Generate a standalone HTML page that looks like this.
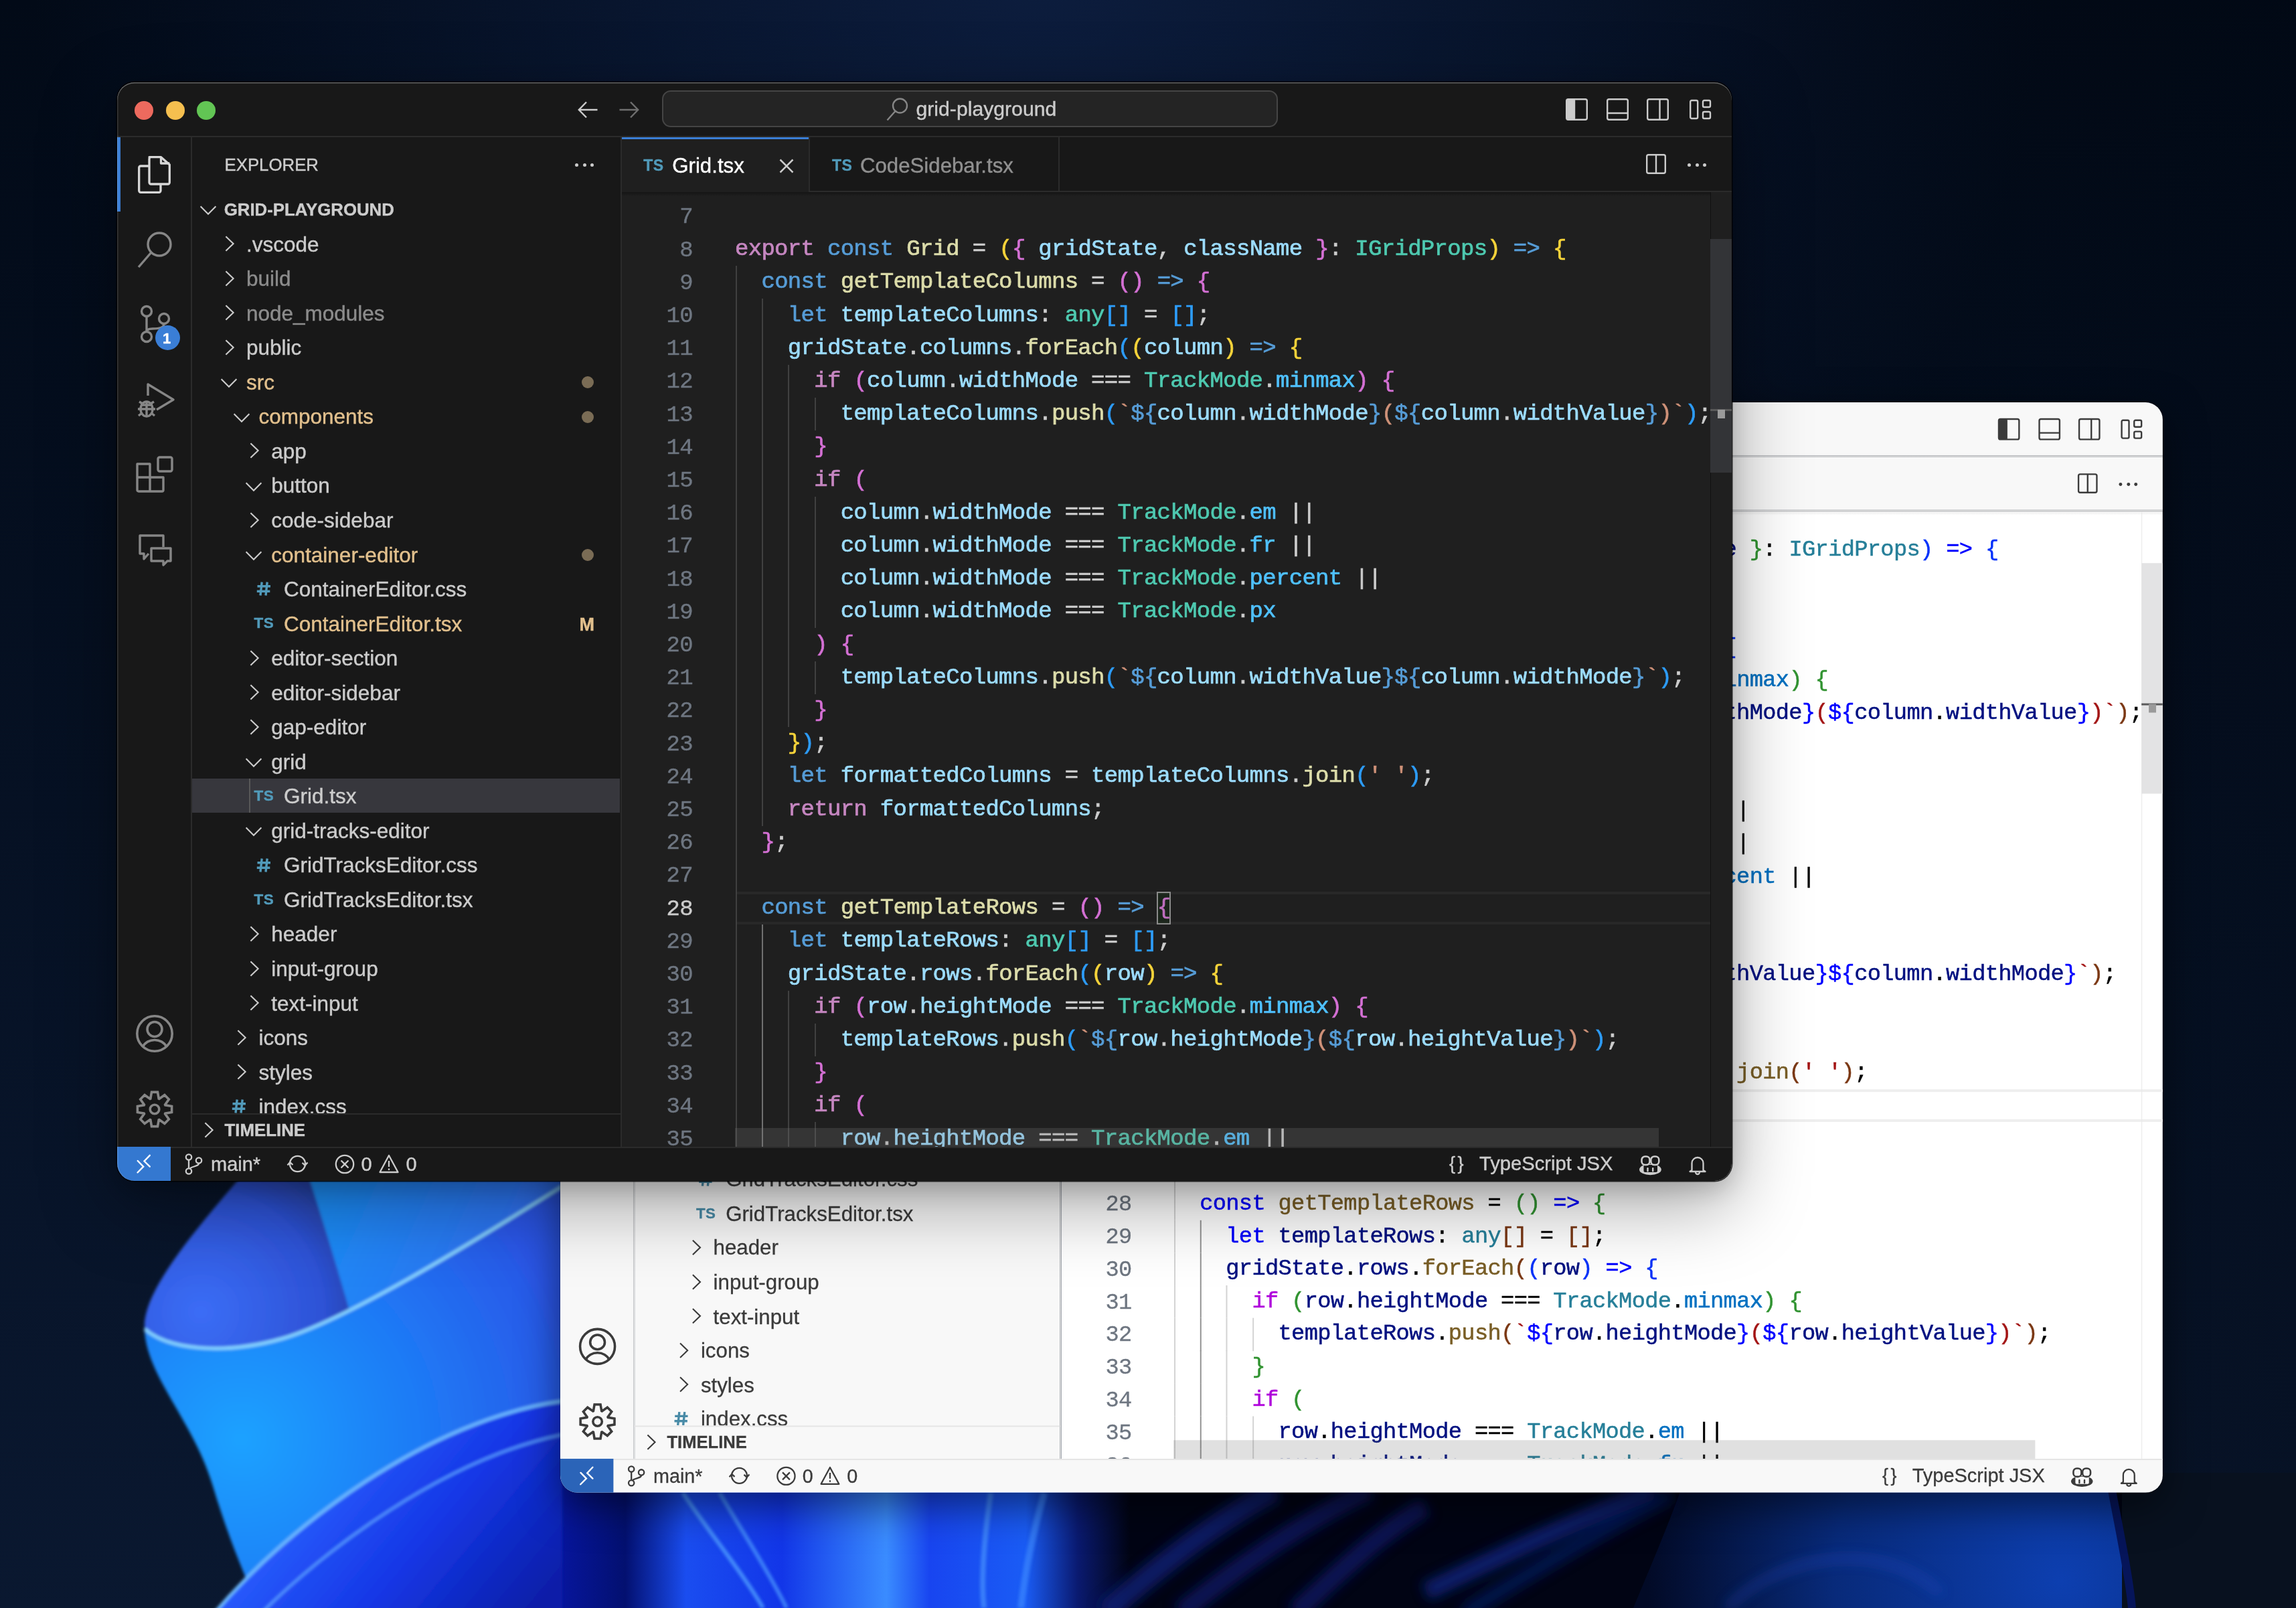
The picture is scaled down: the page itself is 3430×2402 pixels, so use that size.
<!DOCTYPE html><html><head><meta charset="utf-8"><style>html,body{margin:0;padding:0}body{width:3430px;height:2402px;overflow:hidden;position:relative;background:#050d1c}.wd div{-webkit-text-stroke-width:0.4px}.wl div{-webkit-text-stroke-width:0.3px}</style></head><body><svg style="position:absolute;left:0;top:0" width="3430" height="2402" viewBox="0 0 3430 2402">
<defs>
<linearGradient id="g0" x1="0" y1="0" x2="0" y2="1">
<stop offset="0" stop-color="#020a17"/><stop offset="1" stop-color="#0a1830"/>
</linearGradient>
<radialGradient id="g1" cx="1550" cy="-50" r="1500" gradientUnits="userSpaceOnUse" gradientTransform="translate(1550 -50) scale(1 0.9) translate(-1550 50)">
<stop offset="0" stop-color="#0d1e40" stop-opacity="0.95"/><stop offset="1" stop-color="#0d1e40" stop-opacity="0"/>
</radialGradient>
<linearGradient id="g2" x1="2300" y1="0" x2="3430" y2="0" gradientUnits="userSpaceOnUse">
<stop offset="0" stop-color="#000610" stop-opacity="0"/><stop offset="1" stop-color="#000610" stop-opacity="0.3"/>
</linearGradient>
<radialGradient id="rA" cx="360" cy="2150" r="520" gradientUnits="userSpaceOnUse">
<stop offset="0" stop-color="#1aa2ff"/><stop offset="0.55" stop-color="#1f78f5"/><stop offset="1" stop-color="#2a55e6"/>
</radialGradient>
<radialGradient id="rFold" cx="300" cy="1960" r="260" gradientUnits="userSpaceOnUse">
<stop offset="0" stop-color="#3b6df6"/><stop offset="0.7" stop-color="#2d52d6"/><stop offset="1" stop-color="#263f9e"/>
</radialGradient>
<linearGradient id="gBack" x1="470" y1="1770" x2="760" y2="1900" gradientUnits="userSpaceOnUse">
<stop offset="0" stop-color="#1a8ff8"/><stop offset="1" stop-color="#2f6ff0"/>
</linearGradient>
<linearGradient id="gB" x1="500" y1="2150" x2="800" y2="2402" gradientUnits="userSpaceOnUse">
<stop offset="0" stop-color="#2a60ff"/><stop offset="0.5" stop-color="#1537e6"/><stop offset="1" stop-color="#0a1ea8"/>
</linearGradient>
<linearGradient id="gStrip" x1="830" y1="0" x2="3430" y2="0" gradientUnits="userSpaceOnUse">
<stop offset="0" stop-color="#0716a0"/>
<stop offset="0.04" stop-color="#031070"/>
<stop offset="0.075" stop-color="#1a4df0"/>
<stop offset="0.13" stop-color="#1236e8"/>
<stop offset="0.19" stop-color="#3a8cff"/>
<stop offset="0.215" stop-color="#1845f0"/>
<stop offset="0.27" stop-color="#1a5cf5"/>
<stop offset="0.30" stop-color="#0a1a70"/>
<stop offset="0.33" stop-color="#010414"/>
<stop offset="1" stop-color="#010414"/>
</linearGradient>
<radialGradient id="gDome" cx="3080" cy="2360" r="620" gradientUnits="userSpaceOnUse">
<stop offset="0" stop-color="#0d3fb0"/><stop offset="0.55" stop-color="#082a7a"/><stop offset="1" stop-color="#020a26"/>
</radialGradient>
<filter id="blur2" x="-5%" y="-5%" width="110%" height="110%"><feGaussianBlur stdDeviation="2"/></filter>
<filter id="blur6" x="-20%" y="-20%" width="140%" height="140%"><feGaussianBlur stdDeviation="9"/></filter>
</defs>
<rect width="3430" height="2402" fill="url(#g0)"/>
<rect width="3430" height="2402" fill="url(#g1)"/>
<rect width="3430" height="2402" fill="url(#g2)"/>
<!-- bottom strip -->
<rect x="830" y="2200" width="2600" height="202" fill="url(#gStrip)"/>
<path d="M2440 2402 C2470 2330 2500 2260 2520 2200 L3150 2200 C3165 2280 3180 2350 3185 2402 Z" fill="url(#gDome)"/>
<rect x="3170" y="2200" width="260" height="202" fill="#08111f"/>
<path d="M3150 2200 C3165 2280 3180 2350 3185 2402" stroke="#06155a" stroke-width="12" fill="none"/>
<g filter="url(#blur2)" fill="none">
<path d="M1020 2230 C1060 2290 1110 2350 1140 2402" stroke="#4f9dff" stroke-width="6" opacity="0.8"/>
<path d="M1075 2230 C1110 2290 1150 2350 1175 2402" stroke="#4f9dff" stroke-width="6" opacity="0.7"/>
<path d="M1480 2230 C1470 2300 1465 2360 1470 2402" stroke="#4f9dff" stroke-width="8" opacity="0.6"/>
<path d="M1560 2230 C1540 2300 1530 2360 1525 2402" stroke="#3f8dff" stroke-width="10" opacity="0.6"/>
</g><g filter="url(#blur6)" fill="none"><path d="M1651 2410 C1730 2340 1820 2270 1906 2225" stroke="#0c2280" stroke-width="34" opacity="0.75"/>
<path d="M1763 2410 C1850 2340 1950 2270 2047 2225" stroke="#0c2280" stroke-width="30" opacity="0.6"/>
<path d="M1934 2410 C2000 2350 2060 2290 2130 2250" stroke="#0c2280" stroke-width="30" opacity="0.6"/>
<path d="M2130 2378 C2250 2320 2380 2260 2470 2225" stroke="#0d2890" stroke-width="28" opacity="0.7"/>
<path d="M2187 2410 C2300 2340 2420 2270 2498 2232" stroke="#0a2070" stroke-width="24" opacity="0.6"/>
<path d="M2580 2402 C2650 2330 2800 2290 2900 2380" stroke="#2a50d0" stroke-width="8" opacity="0.5"/>
</g>
<!-- ribbon A -->
<g filter="url(#blur2)">
<path d="M358 1760 C290 1840 212 1930 216 1990 C222 2060 290 2125 318 2220 C342 2300 368 2360 390 2410 L840 2410 L840 1760 Z" fill="url(#rA)"/>
<path d="M358 1760 C290 1840 212 1930 216 1985 C250 2015 330 2025 420 2000 C450 1991 490 1972 522 1957 C500 1880 475 1800 462 1760 Z" fill="url(#rFold)"/>
<path d="M462 1760 C475 1800 500 1880 522 1957 C600 1920 720 1848 840 1772 L840 1760 Z" fill="url(#gBack)"/>
<path d="M216 1985 C250 2015 330 2025 420 2000 C510 1975 690 1866 840 1772" fill="none" stroke="#86d4ff" stroke-width="5"/>
<path d="M320 2410 C430 2280 640 2120 840 2093 L840 2410 Z" fill="url(#gB)"/>
<path d="M320 2410 C430 2280 640 2120 840 2093" fill="none" stroke="#6ab8ff" stroke-width="5"/>
<path d="M390 2410 C480 2320 660 2180 840 2143" fill="none" stroke="#5aa0ff" stroke-width="4" opacity="0.85"/>
</g>
</svg>
<div class="wl" style="position:absolute;left:837px;top:601px;width:2412px;height:1641px;transform:scale(0.9925);transform-origin:0 0;border-radius:26px;overflow:hidden;box-shadow:0 0 0 1px rgba(0,0,0,0.2), 0 20px 60px rgba(0,0,0,0.5)"><div style="position:absolute;left:0.0px;top:0.0px;width:2412.0px;height:80.0px;background:#f8f8f8;"></div><div style="position:absolute;left:0.0px;top:80.0px;width:2412.0px;height:2.0px;background:#e5e5e5;"></div><div style="position:absolute;left:26.0px;top:28.0px;width:28.0px;height:28.0px;background:#ed6a5e;border-radius:50%"></div><div style="position:absolute;left:72.5px;top:28.0px;width:28.0px;height:28.0px;background:#f5bf4f;border-radius:50%"></div><div style="position:absolute;left:119.4px;top:28.0px;width:28.0px;height:28.0px;background:#62c554;border-radius:50%"></div><svg style="position:absolute;left:688px;top:28px;width:30px;height:26px;overflow:visible" viewBox="0 0 30 26" ><path d="M13 1.5 L1.8 13 L13 24.5 M1.8 13 H29.5" fill="none" stroke="#3b3b3b" stroke-width="2.4"/></svg><svg style="position:absolute;left:750px;top:28px;width:30px;height:26px;overflow:visible" viewBox="0 0 30 26" ><path d="M17 1.5 L28.2 13 L17 24.5 M28.2 13 H0.5" fill="none" stroke="#a0a0a0" stroke-width="2.4"/></svg><div style="position:absolute;left:814.0px;top:12.0px;width:920.0px;height:55.0px;background:#ffffff;border:2px solid #cecece;box-sizing:border-box;border-radius:13px"></div><svg style="position:absolute;left:1149px;top:22px;width:34px;height:36px;overflow:visible" viewBox="0 0 34 36" ><g fill="none" stroke="#3b3b3b" stroke-width="2.4"><circle cx="20.5" cy="13" r="10.5"/><path d="M13.5 21 L1.5 34.5"/></g></svg><div style="position:absolute;left:1193.5px;top:24.7px;font:400 30.2px/30.2px 'Liberation Sans', sans-serif;color:#3b3b3b;white-space:pre;">grid-playground</div><svg style="position:absolute;left:2164px;top:23.5px;width:33px;height:33px;overflow:visible" viewBox="0 0 33 33" ><rect x="1.2" y="1.2" width="30.6" height="30.6" rx="2.5" fill="none" stroke="#3b3b3b" stroke-width="2.4"/><rect x="1.2" y="1.2" width="13" height="30.6" rx="2" fill="#3b3b3b"/></svg><svg style="position:absolute;left:2225px;top:23.5px;width:33px;height:33px;overflow:visible" viewBox="0 0 33 33" ><rect x="1.2" y="1.2" width="30.6" height="30.6" rx="2.5" fill="none" stroke="#3b3b3b" stroke-width="2.4"/><path d="M1.2 22 H31.8" stroke="#3b3b3b" stroke-width="2.4"/></svg><svg style="position:absolute;left:2285px;top:23.5px;width:33px;height:33px;overflow:visible" viewBox="0 0 33 33" ><rect x="1.2" y="1.2" width="30.6" height="30.6" rx="2.5" fill="none" stroke="#3b3b3b" stroke-width="2.4"/><path d="M19.5 1.2 V31.8" stroke="#3b3b3b" stroke-width="2.4"/></svg><svg style="position:absolute;left:2349px;top:23.5px;width:33px;height:33px;overflow:visible" viewBox="0 0 33 33" ><g fill="none" stroke="#3b3b3b" stroke-width="2.4"><rect x="1.2" y="3" width="11" height="27" rx="2"/><rect x="20" y="3" width="11" height="10" rx="2"/><rect x="20" y="20" width="11" height="10" rx="2"/></g></svg><div style="position:absolute;left:0.0px;top:82.0px;width:110.0px;height:1508.0px;background:#f8f8f8;"></div><div style="position:absolute;left:110.0px;top:82.0px;width:2.0px;height:1508.0px;background:#e5e5e5;"></div><div style="position:absolute;left:0.0px;top:82.0px;width:5.0px;height:111.0px;background:#2b64b8;"></div><svg style="position:absolute;left:30.5px;top:110px;width:50px;height:56px;overflow:visible" viewBox="0 0 50 56" ><g fill="none" stroke="#1f1f1f" stroke-width="3.3" stroke-linejoin="round"><path d="M17 1.7 H34.5 L47.3 13 V39.5 a2.5 2.5 0 0 1-2.5 2.5 H19.5 a2.5 2.5 0 0 1-2.5-2.5 V4.2 a2.5 2.5 0 0 1 2.5-2.5 Z"/><path d="M34.5 1.7 V11 H47.3"/><path d="M17 15 H4.2 a2.5 2.5 0 0 0-2.5 2.5 V51.8 a2.5 2.5 0 0 0 2.5 2.5 H31.5 a2.5 2.5 0 0 0 2.5-2.5 V42"/></g></svg><svg style="position:absolute;left:30px;top:221px;width:56px;height:58px;overflow:visible" viewBox="0 0 56 58" ><g fill="none" stroke="#3b3b3b" stroke-width="3.4"><circle cx="33" cy="21" r="17"/><path d="M21 33 L2 55"/></g></svg><svg style="position:absolute;left:32.5px;top:333px;width:52px;height:56px;overflow:visible" viewBox="0 0 52 56" ><g fill="none" stroke="#3b3b3b" stroke-width="3.4"><circle cx="11" cy="9" r="7.5"/><circle cx="37" cy="20" r="7.5"/><circle cx="11" cy="47" r="7.5"/><path d="M11 16.5 V39.5"/><path d="M37 27.5 C37 34 30 35 20 35 C14 35 11 37 11 39.5"/></g></svg><div style="position:absolute;left:56.5px;top:362.5px;width:37.0px;height:37.0px;background:#2b64b8;border-radius:50%"></div><div style="position:absolute;left:68.0px;top:372.4px;font:700 22px/22px 'Liberation Sans', sans-serif;color:#ffffff;white-space:pre;">1</div><svg style="position:absolute;left:27px;top:448px;width:62px;height:56px;overflow:visible" viewBox="0 0 62 56" ><g fill="none" stroke="#3b3b3b" stroke-width="3.4" stroke-linejoin="round"><path d="M19 20 V3 L57 26 L32 41"/><ellipse cx="17" cy="40" rx="9" ry="11"/><path d="M8 34 H26 M4 40 H30 M5 50 L10 46 M29 50 L24 46 M6 29 L11 32 M28 29 L23 32 M17 29 V51"/></g></svg><svg style="position:absolute;left:27px;top:558px;width:58px;height:58px;overflow:visible" viewBox="0 0 58 58" ><g fill="none" stroke="#3b3b3b" stroke-width="3.4" stroke-linejoin="round"><path d="M3 12 H22 V32 H42 V51 a2 2 0 0 1 -2 2 H5 a2 2 0 0 1 -2-2 Z"/><path d="M3 32 H22 V53"/><rect x="34" y="2" width="21" height="21" rx="2.5"/></g></svg><svg style="position:absolute;left:31px;top:674px;width:52px;height:50px;overflow:visible" viewBox="0 0 52 50" ><g fill="none" stroke="#3b3b3b" stroke-width="3.4" stroke-linejoin="round"><path d="M38 20 V3 H3 V30 H9 V38 L16 30"/><path d="M20 22 H49 V41 H44 L38 47 V41 H20 Z"/></g></svg><svg style="position:absolute;left:27px;top:1392px;width:58px;height:58px;overflow:visible" viewBox="0 0 58 58" ><g fill="none" stroke="#3b3b3b" stroke-width="3.6"><circle cx="29" cy="29" r="26.2"/><circle cx="29" cy="22.5" r="11"/><path d="M11.5 48.5 A19 16.5 0 0 1 46.5 48.5"/></g></svg><svg style="position:absolute;left:25px;top:1503px;width:62px;height:62px;overflow:visible" viewBox="0 0 62 62" ><g fill="none" stroke="#3b3b3b" stroke-width="3.6" stroke-linejoin="miter"><path d="M24.80 15.17 L26.49 5.39 L35.51 5.39 L37.20 15.17 L37.81 15.42 L45.91 9.70 L52.30 16.09 L46.58 24.19 L46.83 24.80 L56.61 26.49 L56.61 35.51 L46.83 37.20 L46.58 37.81 L52.30 45.91 L45.91 52.30 L37.81 46.58 L37.20 46.83 L35.51 56.61 L26.49 56.61 L24.80 46.83 L24.19 46.58 L16.09 52.30 L9.70 45.91 L15.42 37.81 L15.17 37.20 L5.39 35.51 L5.39 26.49 L15.17 24.80 L15.42 24.19 L9.70 16.09 L16.09 9.70 L24.19 15.42 Z"/><circle cx="31" cy="31" r="6.8"/></g></svg><div style="position:absolute;left:112.0px;top:82.0px;width:640.0px;height:1508.0px;background:#f8f8f8;"></div><div style="position:absolute;left:752.0px;top:82.0px;width:2.0px;height:1508.0px;background:#e5e5e5;"></div><div style="position:absolute;left:160.5px;top:110.7px;font:400 25.8px/25.8px 'Liberation Sans', sans-serif;color:#3b3b3b;white-space:pre;">EXPLORER</div><div style="position:absolute;left:684.0px;top:120.5px;width:5.0px;height:5.0px;background:#3b3b3b;border-radius:50%"></div><div style="position:absolute;left:695.5px;top:120.5px;width:5.0px;height:5.0px;background:#3b3b3b;border-radius:50%"></div><div style="position:absolute;left:707.0px;top:120.5px;width:5.0px;height:5.0px;background:#3b3b3b;border-radius:50%"></div><svg style="position:absolute;left:122.69999999999999px;top:182.7px;width:26px;height:16px;overflow:visible" viewBox="0 0 26 16" ><path d="M1.6 2.3 L13 13.7 L24.4 2.3" fill="none" stroke="#3b3b3b" stroke-width="2.1"/></svg><div style="position:absolute;left:159.7px;top:177.7px;font:700 25.8px/25.8px 'Liberation Sans', sans-serif;color:#3b3b3b;white-space:pre;">GRID-PLAYGROUND</div><div style="position:absolute;left:0;top:0;width:2412px;height:1539.5px;overflow:hidden"><svg style="position:absolute;left:159.5px;top:227.20000000000002px;width:16px;height:28px;overflow:visible" viewBox="0 0 16 28" ><path d="M2.4 3.2 L13.6 14 L2.4 24.8" fill="none" stroke="#3b3b3b" stroke-width="2.1"/></svg><div style="position:absolute;left:192.9px;top:226.6px;font:400 31.5px/31.5px 'Liberation Sans', sans-serif;color:#3b3b3b;white-space:pre;">.vscode</div><svg style="position:absolute;left:159.5px;top:278.74px;width:16px;height:28px;overflow:visible" viewBox="0 0 16 28" ><path d="M2.4 3.2 L13.6 14 L2.4 24.8" fill="none" stroke="#3b3b3b" stroke-width="2.1"/></svg><div style="position:absolute;left:192.9px;top:278.2px;font:400 31.5px/31.5px 'Liberation Sans', sans-serif;color:#8e8e90;white-space:pre;">build</div><svg style="position:absolute;left:159.5px;top:330.28px;width:16px;height:28px;overflow:visible" viewBox="0 0 16 28" ><path d="M2.4 3.2 L13.6 14 L2.4 24.8" fill="none" stroke="#3b3b3b" stroke-width="2.1"/></svg><div style="position:absolute;left:192.9px;top:329.7px;font:400 31.5px/31.5px 'Liberation Sans', sans-serif;color:#8e8e90;white-space:pre;">node_modules</div><svg style="position:absolute;left:159.5px;top:381.82px;width:16px;height:28px;overflow:visible" viewBox="0 0 16 28" ><path d="M2.4 3.2 L13.6 14 L2.4 24.8" fill="none" stroke="#3b3b3b" stroke-width="2.1"/></svg><div style="position:absolute;left:192.9px;top:381.3px;font:400 31.5px/31.5px 'Liberation Sans', sans-serif;color:#3b3b3b;white-space:pre;">public</div><svg style="position:absolute;left:154.0px;top:440.96000000000004px;width:26px;height:16px;overflow:visible" viewBox="0 0 26 16" ><path d="M1.6 2.3 L13 13.7 L24.4 2.3" fill="none" stroke="#3b3b3b" stroke-width="2.1"/></svg><div style="position:absolute;left:192.9px;top:432.8px;font:400 31.5px/31.5px 'Liberation Sans', sans-serif;color:#895503;white-space:pre;">src</div><div style="position:absolute;left:693.5px;top:439.0px;width:18.0px;height:18.0px;background:#c9a86a;border-radius:50%"></div><svg style="position:absolute;left:172.7px;top:492.5px;width:26px;height:16px;overflow:visible" viewBox="0 0 26 16" ><path d="M1.6 2.3 L13 13.7 L24.4 2.3" fill="none" stroke="#3b3b3b" stroke-width="2.1"/></svg><div style="position:absolute;left:211.5px;top:484.3px;font:400 31.5px/31.5px 'Liberation Sans', sans-serif;color:#895503;white-space:pre;">components</div><div style="position:absolute;left:693.5px;top:490.5px;width:18.0px;height:18.0px;background:#c9a86a;border-radius:50%"></div><svg style="position:absolute;left:196.9px;top:536.4399999999999px;width:16px;height:28px;overflow:visible" viewBox="0 0 16 28" ><path d="M2.4 3.2 L13.6 14 L2.4 24.8" fill="none" stroke="#3b3b3b" stroke-width="2.1"/></svg><div style="position:absolute;left:230.3px;top:535.9px;font:400 31.5px/31.5px 'Liberation Sans', sans-serif;color:#3b3b3b;white-space:pre;">app</div><svg style="position:absolute;left:191.4px;top:595.5799999999999px;width:26px;height:16px;overflow:visible" viewBox="0 0 26 16" ><path d="M1.6 2.3 L13 13.7 L24.4 2.3" fill="none" stroke="#3b3b3b" stroke-width="2.1"/></svg><div style="position:absolute;left:230.3px;top:587.4px;font:400 31.5px/31.5px 'Liberation Sans', sans-serif;color:#3b3b3b;white-space:pre;">button</div><svg style="position:absolute;left:196.9px;top:639.52px;width:16px;height:28px;overflow:visible" viewBox="0 0 16 28" ><path d="M2.4 3.2 L13.6 14 L2.4 24.8" fill="none" stroke="#3b3b3b" stroke-width="2.1"/></svg><div style="position:absolute;left:230.3px;top:639.0px;font:400 31.5px/31.5px 'Liberation Sans', sans-serif;color:#3b3b3b;white-space:pre;">code-sidebar</div><svg style="position:absolute;left:191.4px;top:698.6600000000001px;width:26px;height:16px;overflow:visible" viewBox="0 0 26 16" ><path d="M1.6 2.3 L13 13.7 L24.4 2.3" fill="none" stroke="#3b3b3b" stroke-width="2.1"/></svg><div style="position:absolute;left:230.3px;top:690.5px;font:400 31.5px/31.5px 'Liberation Sans', sans-serif;color:#895503;white-space:pre;">container-editor</div><div style="position:absolute;left:693.5px;top:696.7px;width:18.0px;height:18.0px;background:#c9a86a;border-radius:50%"></div><svg style="position:absolute;left:208.2px;top:746.2px;width:22px;height:21px;overflow:visible" viewBox="0 0 22 21" ><path d="M8.2 0.5 L6 20.5 M16.2 0.5 L14 20.5 M1.5 6.8 H21 M0.8 14.2 H20.3" stroke="#498ba7" stroke-width="3.4" fill="none"/></svg><div style="position:absolute;left:249.0px;top:742.0px;font:400 31.5px/31.5px 'Liberation Sans', sans-serif;color:#3b3b3b;white-space:pre;">ContainerEditor.css</div><div style="position:absolute;left:204.5px;top:797.2px;font:700 22.5px/22.5px 'Liberation Sans', sans-serif;color:#498ba7;white-space:pre;letter-spacing:0.5px">TS</div><div style="position:absolute;left:249.0px;top:793.6px;font:400 31.5px/31.5px 'Liberation Sans', sans-serif;color:#895503;white-space:pre;">ContainerEditor.tsx</div><div style="position:absolute;left:690.5px;top:797.4px;font:700 27px/27px 'Liberation Sans', sans-serif;color:#895503;white-space:pre;">M</div><svg style="position:absolute;left:196.9px;top:845.68px;width:16px;height:28px;overflow:visible" viewBox="0 0 16 28" ><path d="M2.4 3.2 L13.6 14 L2.4 24.8" fill="none" stroke="#3b3b3b" stroke-width="2.1"/></svg><div style="position:absolute;left:230.3px;top:845.1px;font:400 31.5px/31.5px 'Liberation Sans', sans-serif;color:#3b3b3b;white-space:pre;">editor-section</div><svg style="position:absolute;left:196.9px;top:897.2199999999999px;width:16px;height:28px;overflow:visible" viewBox="0 0 16 28" ><path d="M2.4 3.2 L13.6 14 L2.4 24.8" fill="none" stroke="#3b3b3b" stroke-width="2.1"/></svg><div style="position:absolute;left:230.3px;top:896.7px;font:400 31.5px/31.5px 'Liberation Sans', sans-serif;color:#3b3b3b;white-space:pre;">editor-sidebar</div><svg style="position:absolute;left:196.9px;top:948.7599999999999px;width:16px;height:28px;overflow:visible" viewBox="0 0 16 28" ><path d="M2.4 3.2 L13.6 14 L2.4 24.8" fill="none" stroke="#3b3b3b" stroke-width="2.1"/></svg><div style="position:absolute;left:230.3px;top:948.2px;font:400 31.5px/31.5px 'Liberation Sans', sans-serif;color:#3b3b3b;white-space:pre;">gap-editor</div><svg style="position:absolute;left:191.4px;top:1007.9000000000001px;width:26px;height:16px;overflow:visible" viewBox="0 0 26 16" ><path d="M1.6 2.3 L13 13.7 L24.4 2.3" fill="none" stroke="#3b3b3b" stroke-width="2.1"/></svg><div style="position:absolute;left:230.3px;top:999.7px;font:400 31.5px/31.5px 'Liberation Sans', sans-serif;color:#3b3b3b;white-space:pre;">grid</div><div style="position:absolute;left:112.0px;top:1040.4px;width:639.0px;height:50.5px;background:#e4e6f1;"></div><div style="position:absolute;left:197.0px;top:1040.4px;width:2.0px;height:50.5px;background:#c8c8c8;"></div><div style="position:absolute;left:204.5px;top:1054.9px;font:700 22.5px/22.5px 'Liberation Sans', sans-serif;color:#498ba7;white-space:pre;letter-spacing:0.5px">TS</div><div style="position:absolute;left:249.0px;top:1051.3px;font:400 31.5px/31.5px 'Liberation Sans', sans-serif;color:#3b3b3b;white-space:pre;">Grid.tsx</div><svg style="position:absolute;left:191.4px;top:1110.98px;width:26px;height:16px;overflow:visible" viewBox="0 0 26 16" ><path d="M1.6 2.3 L13 13.7 L24.4 2.3" fill="none" stroke="#3b3b3b" stroke-width="2.1"/></svg><div style="position:absolute;left:230.3px;top:1102.8px;font:400 31.5px/31.5px 'Liberation Sans', sans-serif;color:#3b3b3b;white-space:pre;">grid-tracks-editor</div><svg style="position:absolute;left:208.2px;top:1158.52px;width:22px;height:21px;overflow:visible" viewBox="0 0 22 21" ><path d="M8.2 0.5 L6 20.5 M16.2 0.5 L14 20.5 M1.5 6.8 H21 M0.8 14.2 H20.3" stroke="#498ba7" stroke-width="3.4" fill="none"/></svg><div style="position:absolute;left:249.0px;top:1154.4px;font:400 31.5px/31.5px 'Liberation Sans', sans-serif;color:#3b3b3b;white-space:pre;">GridTracksEditor.css</div><div style="position:absolute;left:204.5px;top:1209.5px;font:700 22.5px/22.5px 'Liberation Sans', sans-serif;color:#498ba7;white-space:pre;letter-spacing:0.5px">TS</div><div style="position:absolute;left:249.0px;top:1205.9px;font:400 31.5px/31.5px 'Liberation Sans', sans-serif;color:#3b3b3b;white-space:pre;">GridTracksEditor.tsx</div><svg style="position:absolute;left:196.9px;top:1258.0px;width:16px;height:28px;overflow:visible" viewBox="0 0 16 28" ><path d="M2.4 3.2 L13.6 14 L2.4 24.8" fill="none" stroke="#3b3b3b" stroke-width="2.1"/></svg><div style="position:absolute;left:230.3px;top:1257.4px;font:400 31.5px/31.5px 'Liberation Sans', sans-serif;color:#3b3b3b;white-space:pre;">header</div><svg style="position:absolute;left:196.9px;top:1309.54px;width:16px;height:28px;overflow:visible" viewBox="0 0 16 28" ><path d="M2.4 3.2 L13.6 14 L2.4 24.8" fill="none" stroke="#3b3b3b" stroke-width="2.1"/></svg><div style="position:absolute;left:230.3px;top:1309.0px;font:400 31.5px/31.5px 'Liberation Sans', sans-serif;color:#3b3b3b;white-space:pre;">input-group</div><svg style="position:absolute;left:196.9px;top:1361.08px;width:16px;height:28px;overflow:visible" viewBox="0 0 16 28" ><path d="M2.4 3.2 L13.6 14 L2.4 24.8" fill="none" stroke="#3b3b3b" stroke-width="2.1"/></svg><div style="position:absolute;left:230.3px;top:1360.5px;font:400 31.5px/31.5px 'Liberation Sans', sans-serif;color:#3b3b3b;white-space:pre;">text-input</div><svg style="position:absolute;left:178.2px;top:1412.6200000000001px;width:16px;height:28px;overflow:visible" viewBox="0 0 16 28" ><path d="M2.4 3.2 L13.6 14 L2.4 24.8" fill="none" stroke="#3b3b3b" stroke-width="2.1"/></svg><div style="position:absolute;left:211.5px;top:1412.1px;font:400 31.5px/31.5px 'Liberation Sans', sans-serif;color:#3b3b3b;white-space:pre;">icons</div><svg style="position:absolute;left:178.2px;top:1464.16px;width:16px;height:28px;overflow:visible" viewBox="0 0 16 28" ><path d="M2.4 3.2 L13.6 14 L2.4 24.8" fill="none" stroke="#3b3b3b" stroke-width="2.1"/></svg><div style="position:absolute;left:211.5px;top:1463.6px;font:400 31.5px/31.5px 'Liberation Sans', sans-serif;color:#3b3b3b;white-space:pre;">styles</div><svg style="position:absolute;left:170.7px;top:1519.3px;width:22px;height:21px;overflow:visible" viewBox="0 0 22 21" ><path d="M8.2 0.5 L6 20.5 M16.2 0.5 L14 20.5 M1.5 6.8 H21 M0.8 14.2 H20.3" stroke="#498ba7" stroke-width="3.4" fill="none"/></svg><div style="position:absolute;left:211.5px;top:1515.1px;font:400 31.5px/31.5px 'Liberation Sans', sans-serif;color:#3b3b3b;white-space:pre;">index.css</div></div><div style="position:absolute;left:112.0px;top:1539.5px;width:640.0px;height:2.0px;background:#e5e5e5;"></div><svg style="position:absolute;left:128.5px;top:1551px;width:16px;height:28px;overflow:visible" viewBox="0 0 16 28" ><path d="M2.4 3.2 L13.6 14 L2.4 24.8" fill="none" stroke="#3b3b3b" stroke-width="2.1"/></svg><div style="position:absolute;left:160.6px;top:1553.0px;font:700 25.8px/25.8px 'Liberation Sans', sans-serif;color:#3b3b3b;white-space:pre;">TIMELINE</div><div style="position:absolute;left:754.0px;top:82.0px;width:1658.0px;height:80.0px;background:#f8f8f8;"></div><div style="position:absolute;left:754.0px;top:162.0px;width:1658.0px;height:2.0px;background:#e5e5e5;"></div><div style="position:absolute;left:754.0px;top:82.0px;width:279.0px;height:82.0px;background:#ffffff;"></div><div style="position:absolute;left:754.0px;top:82.0px;width:279.0px;height:2.6px;background:#2b64b8;"></div><div style="position:absolute;left:786.3px;top:112.7px;font:700 23px/23px 'Liberation Sans', sans-serif;color:#498ba7;white-space:pre;letter-spacing:0.5px">TS</div><div style="position:absolute;left:829.3px;top:109.1px;font:400 31.2px/31.2px 'Liberation Sans', sans-serif;color:#333333;white-space:pre;">Grid.tsx</div><svg style="position:absolute;left:989px;top:113.5px;width:22px;height:22px;overflow:visible" viewBox="0 0 22 22" ><path d="M1.5 1.5 L20.5 20.5 M20.5 1.5 L1.5 20.5" stroke="#3b3b3b" stroke-width="2.5"/></svg><div style="position:absolute;left:1033.0px;top:82.0px;width:2.0px;height:80.0px;background:#e5e5e5;"></div><div style="position:absolute;left:1406.0px;top:82.0px;width:2.0px;height:80.0px;background:#e5e5e5;"></div><div style="position:absolute;left:1068.0px;top:112.7px;font:700 23px/23px 'Liberation Sans', sans-serif;color:#498ba7;white-space:pre;letter-spacing:0.5px">TS</div><div style="position:absolute;left:1110.0px;top:109.1px;font:400 31.2px/31.2px 'Liberation Sans', sans-serif;color:#868686;white-space:pre;">CodeSidebar.tsx</div><svg style="position:absolute;left:2283.5px;top:107px;width:30px;height:30px;overflow:visible" viewBox="0 0 30 30" ><g fill="none" stroke="#3b3b3b" stroke-width="2.4"><rect x="1.2" y="1.2" width="27.6" height="27.6" rx="2.5"/><path d="M15 1.2 V28.8"/></g></svg><div style="position:absolute;left:2346.0px;top:120.5px;width:5.0px;height:5.0px;background:#3b3b3b;border-radius:50%"></div><div style="position:absolute;left:2357.5px;top:120.5px;width:5.0px;height:5.0px;background:#3b3b3b;border-radius:50%"></div><div style="position:absolute;left:2369.0px;top:120.5px;width:5.0px;height:5.0px;background:#3b3b3b;border-radius:50%"></div><div style="position:absolute;left:754px;top:164px;width:1658px;height:1426px;overflow:hidden"><div style="position:absolute;left:0.0px;top:0.0px;width:1658.0px;height:1426.0px;background:#ffffff;"></div><div style="position:absolute;left:171.0px;top:869.8px;width:1490.0px;height:49.6px;background:transparent;border-top:4.6px solid #eeeeee;border-bottom:4.6px solid #eeeeee;box-sizing:border-box"></div><div style="position:absolute;left:169.5px;top:82.6px;width:2.0px;height:49.4px;background:#d3d3d3;"></div><div style="position:absolute;left:169.5px;top:131.8px;width:2.0px;height:49.4px;background:#d3d3d3;"></div><div style="position:absolute;left:169.5px;top:181.0px;width:2.0px;height:49.4px;background:#d3d3d3;"></div><div style="position:absolute;left:169.5px;top:230.2px;width:2.0px;height:49.4px;background:#d3d3d3;"></div><div style="position:absolute;left:169.5px;top:279.4px;width:2.0px;height:49.4px;background:#d3d3d3;"></div><div style="position:absolute;left:169.5px;top:328.6px;width:2.0px;height:49.4px;background:#d3d3d3;"></div><div style="position:absolute;left:169.5px;top:377.8px;width:2.0px;height:49.4px;background:#d3d3d3;"></div><div style="position:absolute;left:169.5px;top:427.0px;width:2.0px;height:49.4px;background:#d3d3d3;"></div><div style="position:absolute;left:169.5px;top:476.2px;width:2.0px;height:49.4px;background:#d3d3d3;"></div><div style="position:absolute;left:169.5px;top:525.4px;width:2.0px;height:49.4px;background:#d3d3d3;"></div><div style="position:absolute;left:169.5px;top:574.6px;width:2.0px;height:49.4px;background:#d3d3d3;"></div><div style="position:absolute;left:169.5px;top:623.8px;width:2.0px;height:49.4px;background:#d3d3d3;"></div><div style="position:absolute;left:169.5px;top:673.0px;width:2.0px;height:49.4px;background:#d3d3d3;"></div><div style="position:absolute;left:169.5px;top:722.2px;width:2.0px;height:49.4px;background:#d3d3d3;"></div><div style="position:absolute;left:169.5px;top:771.4px;width:2.0px;height:49.4px;background:#d3d3d3;"></div><div style="position:absolute;left:169.5px;top:820.6px;width:2.0px;height:49.4px;background:#d3d3d3;"></div><div style="position:absolute;left:169.5px;top:869.8px;width:2.0px;height:49.4px;background:#d3d3d3;"></div><div style="position:absolute;left:169.5px;top:919.0px;width:2.0px;height:49.4px;background:#d3d3d3;"></div><div style="position:absolute;left:169.5px;top:968.2px;width:2.0px;height:49.4px;background:#d3d3d3;"></div><div style="position:absolute;left:169.5px;top:1017.4px;width:2.0px;height:49.4px;background:#d3d3d3;"></div><div style="position:absolute;left:169.5px;top:1066.6px;width:2.0px;height:49.4px;background:#d3d3d3;"></div><div style="position:absolute;left:169.5px;top:1115.8px;width:2.0px;height:49.4px;background:#d3d3d3;"></div><div style="position:absolute;left:169.5px;top:1165.0px;width:2.0px;height:49.4px;background:#d3d3d3;"></div><div style="position:absolute;left:169.5px;top:1214.2px;width:2.0px;height:49.4px;background:#d3d3d3;"></div><div style="position:absolute;left:169.5px;top:1263.4px;width:2.0px;height:49.4px;background:#d3d3d3;"></div><div style="position:absolute;left:169.5px;top:1312.6px;width:2.0px;height:49.4px;background:#d3d3d3;"></div><div style="position:absolute;left:169.5px;top:1361.8px;width:2.0px;height:49.4px;background:#d3d3d3;"></div><div style="position:absolute;left:169.5px;top:1411.0px;width:2.0px;height:49.4px;background:#d3d3d3;"></div><div style="position:absolute;left:208.9px;top:131.8px;width:2.0px;height:49.4px;background:#d3d3d3;"></div><div style="position:absolute;left:208.9px;top:181.0px;width:2.0px;height:49.4px;background:#d3d3d3;"></div><div style="position:absolute;left:208.9px;top:230.2px;width:2.0px;height:49.4px;background:#d3d3d3;"></div><div style="position:absolute;left:208.9px;top:279.4px;width:2.0px;height:49.4px;background:#d3d3d3;"></div><div style="position:absolute;left:208.9px;top:328.6px;width:2.0px;height:49.4px;background:#d3d3d3;"></div><div style="position:absolute;left:208.9px;top:377.8px;width:2.0px;height:49.4px;background:#d3d3d3;"></div><div style="position:absolute;left:208.9px;top:427.0px;width:2.0px;height:49.4px;background:#d3d3d3;"></div><div style="position:absolute;left:208.9px;top:476.2px;width:2.0px;height:49.4px;background:#d3d3d3;"></div><div style="position:absolute;left:208.9px;top:525.4px;width:2.0px;height:49.4px;background:#d3d3d3;"></div><div style="position:absolute;left:208.9px;top:574.6px;width:2.0px;height:49.4px;background:#d3d3d3;"></div><div style="position:absolute;left:208.9px;top:623.8px;width:2.0px;height:49.4px;background:#d3d3d3;"></div><div style="position:absolute;left:208.9px;top:673.0px;width:2.0px;height:49.4px;background:#d3d3d3;"></div><div style="position:absolute;left:208.9px;top:722.2px;width:2.0px;height:49.4px;background:#d3d3d3;"></div><div style="position:absolute;left:208.9px;top:771.4px;width:2.0px;height:49.4px;background:#d3d3d3;"></div><div style="position:absolute;left:208.9px;top:820.6px;width:2.0px;height:49.4px;background:#d3d3d3;"></div><div style="position:absolute;left:208.9px;top:869.8px;width:2.0px;height:49.4px;background:#d3d3d3;"></div><div style="position:absolute;left:208.9px;top:1066.6px;width:2.0px;height:49.4px;background:#939393;"></div><div style="position:absolute;left:208.9px;top:1115.8px;width:2.0px;height:49.4px;background:#939393;"></div><div style="position:absolute;left:208.9px;top:1165.0px;width:2.0px;height:49.4px;background:#939393;"></div><div style="position:absolute;left:208.9px;top:1214.2px;width:2.0px;height:49.4px;background:#939393;"></div><div style="position:absolute;left:208.9px;top:1263.4px;width:2.0px;height:49.4px;background:#939393;"></div><div style="position:absolute;left:208.9px;top:1312.6px;width:2.0px;height:49.4px;background:#939393;"></div><div style="position:absolute;left:208.9px;top:1361.8px;width:2.0px;height:49.4px;background:#939393;"></div><div style="position:absolute;left:208.9px;top:1411.0px;width:2.0px;height:49.4px;background:#939393;"></div><div style="position:absolute;left:248.3px;top:230.2px;width:2.0px;height:49.4px;background:#d3d3d3;"></div><div style="position:absolute;left:248.3px;top:279.4px;width:2.0px;height:49.4px;background:#d3d3d3;"></div><div style="position:absolute;left:248.3px;top:328.6px;width:2.0px;height:49.4px;background:#d3d3d3;"></div><div style="position:absolute;left:248.3px;top:377.8px;width:2.0px;height:49.4px;background:#d3d3d3;"></div><div style="position:absolute;left:248.3px;top:427.0px;width:2.0px;height:49.4px;background:#d3d3d3;"></div><div style="position:absolute;left:248.3px;top:476.2px;width:2.0px;height:49.4px;background:#d3d3d3;"></div><div style="position:absolute;left:248.3px;top:525.4px;width:2.0px;height:49.4px;background:#d3d3d3;"></div><div style="position:absolute;left:248.3px;top:574.6px;width:2.0px;height:49.4px;background:#d3d3d3;"></div><div style="position:absolute;left:248.3px;top:623.8px;width:2.0px;height:49.4px;background:#d3d3d3;"></div><div style="position:absolute;left:248.3px;top:673.0px;width:2.0px;height:49.4px;background:#d3d3d3;"></div><div style="position:absolute;left:248.3px;top:722.2px;width:2.0px;height:49.4px;background:#d3d3d3;"></div><div style="position:absolute;left:248.3px;top:1165.0px;width:2.0px;height:49.4px;background:#d3d3d3;"></div><div style="position:absolute;left:248.3px;top:1214.2px;width:2.0px;height:49.4px;background:#d3d3d3;"></div><div style="position:absolute;left:248.3px;top:1263.4px;width:2.0px;height:49.4px;background:#d3d3d3;"></div><div style="position:absolute;left:248.3px;top:1312.6px;width:2.0px;height:49.4px;background:#d3d3d3;"></div><div style="position:absolute;left:248.3px;top:1361.8px;width:2.0px;height:49.4px;background:#d3d3d3;"></div><div style="position:absolute;left:248.3px;top:1411.0px;width:2.0px;height:49.4px;background:#d3d3d3;"></div><div style="position:absolute;left:287.7px;top:279.4px;width:2.0px;height:49.4px;background:#d3d3d3;"></div><div style="position:absolute;left:287.7px;top:427.0px;width:2.0px;height:49.4px;background:#d3d3d3;"></div><div style="position:absolute;left:287.7px;top:476.2px;width:2.0px;height:49.4px;background:#d3d3d3;"></div><div style="position:absolute;left:287.7px;top:525.4px;width:2.0px;height:49.4px;background:#d3d3d3;"></div><div style="position:absolute;left:287.7px;top:574.6px;width:2.0px;height:49.4px;background:#d3d3d3;"></div><div style="position:absolute;left:287.7px;top:673.0px;width:2.0px;height:49.4px;background:#d3d3d3;"></div><div style="position:absolute;left:287.7px;top:1214.2px;width:2.0px;height:49.4px;background:#d3d3d3;"></div><div style="position:absolute;left:287.7px;top:1361.8px;width:2.0px;height:49.4px;background:#d3d3d3;"></div><div style="position:absolute;left:287.7px;top:1411.0px;width:2.0px;height:49.4px;background:#d3d3d3;"></div><div style="position:absolute;left:86.3px;top:-7.1px;font:400 34.0px/34.0px 'Liberation Mono', monospace;letter-spacing:-0.70px;color:#6e7681;white-space:pre">7</div><div style="position:absolute;left:169.0px;top:-8.6px;font:400 34.0px/34.0px 'Liberation Mono', monospace;letter-spacing:-0.70px;white-space:pre;-webkit-text-stroke:0.5px currentColor"></div><div style="position:absolute;left:86.3px;top:42.1px;font:400 34.0px/34.0px 'Liberation Mono', monospace;letter-spacing:-0.70px;color:#6e7681;white-space:pre">8</div><div style="position:absolute;left:169.0px;top:40.6px;font:400 34.0px/34.0px 'Liberation Mono', monospace;letter-spacing:-0.70px;white-space:pre;-webkit-text-stroke:0.5px currentColor"><span style="color:#AF00DB;-webkit-text-stroke-color:#AF00DB">export</span> <span style="color:#0000FF;-webkit-text-stroke-color:#0000FF">const</span> <span style="color:#795E26;-webkit-text-stroke-color:#795E26">Grid</span> <span style="color:#000000;-webkit-text-stroke-color:#000000">=</span> <span style="color:#0431FA;-webkit-text-stroke-color:#0431FA">(</span><span style="color:#319331;-webkit-text-stroke-color:#319331">{</span> <span style="color:#001080;-webkit-text-stroke-color:#001080">gridState</span><span style="color:#000000;-webkit-text-stroke-color:#000000">,</span> <span style="color:#001080;-webkit-text-stroke-color:#001080">className</span> <span style="color:#319331;-webkit-text-stroke-color:#319331">}</span><span style="color:#000000;-webkit-text-stroke-color:#000000">:</span> <span style="color:#267F99;-webkit-text-stroke-color:#267F99">IGridProps</span><span style="color:#0431FA;-webkit-text-stroke-color:#0431FA">)</span> <span style="color:#0000FF;-webkit-text-stroke-color:#0000FF">=&gt;</span> <span style="color:#0431FA;-webkit-text-stroke-color:#0431FA">{</span></div><div style="position:absolute;left:86.3px;top:91.3px;font:400 34.0px/34.0px 'Liberation Mono', monospace;letter-spacing:-0.70px;color:#6e7681;white-space:pre">9</div><div style="position:absolute;left:169.0px;top:89.8px;font:400 34.0px/34.0px 'Liberation Mono', monospace;letter-spacing:-0.70px;white-space:pre;-webkit-text-stroke:0.5px currentColor">  <span style="color:#0000FF;-webkit-text-stroke-color:#0000FF">const</span> <span style="color:#795E26;-webkit-text-stroke-color:#795E26">getTemplateColumns</span> <span style="color:#000000;-webkit-text-stroke-color:#000000">=</span> <span style="color:#319331;-webkit-text-stroke-color:#319331">(</span><span style="color:#319331;-webkit-text-stroke-color:#319331">)</span> <span style="color:#0000FF;-webkit-text-stroke-color:#0000FF">=&gt;</span> <span style="color:#319331;-webkit-text-stroke-color:#319331">{</span></div><div style="position:absolute;left:66.6px;top:140.5px;font:400 34.0px/34.0px 'Liberation Mono', monospace;letter-spacing:-0.70px;color:#6e7681;white-space:pre">10</div><div style="position:absolute;left:169.0px;top:139.0px;font:400 34.0px/34.0px 'Liberation Mono', monospace;letter-spacing:-0.70px;white-space:pre;-webkit-text-stroke:0.5px currentColor">    <span style="color:#0000FF;-webkit-text-stroke-color:#0000FF">let</span> <span style="color:#001080;-webkit-text-stroke-color:#001080">templateColumns</span><span style="color:#000000;-webkit-text-stroke-color:#000000">:</span> <span style="color:#267F99;-webkit-text-stroke-color:#267F99">any</span><span style="color:#7B3814;-webkit-text-stroke-color:#7B3814">[</span><span style="color:#7B3814;-webkit-text-stroke-color:#7B3814">]</span> <span style="color:#000000;-webkit-text-stroke-color:#000000">=</span> <span style="color:#7B3814;-webkit-text-stroke-color:#7B3814">[</span><span style="color:#7B3814;-webkit-text-stroke-color:#7B3814">]</span><span style="color:#000000;-webkit-text-stroke-color:#000000">;</span></div><div style="position:absolute;left:66.6px;top:189.7px;font:400 34.0px/34.0px 'Liberation Mono', monospace;letter-spacing:-0.70px;color:#6e7681;white-space:pre">11</div><div style="position:absolute;left:169.0px;top:188.2px;font:400 34.0px/34.0px 'Liberation Mono', monospace;letter-spacing:-0.70px;white-space:pre;-webkit-text-stroke:0.5px currentColor">    <span style="color:#001080;-webkit-text-stroke-color:#001080">gridState</span><span style="color:#000000;-webkit-text-stroke-color:#000000">.</span><span style="color:#001080;-webkit-text-stroke-color:#001080">columns</span><span style="color:#000000;-webkit-text-stroke-color:#000000">.</span><span style="color:#795E26;-webkit-text-stroke-color:#795E26">forEach</span><span style="color:#7B3814;-webkit-text-stroke-color:#7B3814">(</span><span style="color:#0431FA;-webkit-text-stroke-color:#0431FA">(</span><span style="color:#001080;-webkit-text-stroke-color:#001080">column</span><span style="color:#0431FA;-webkit-text-stroke-color:#0431FA">)</span> <span style="color:#0000FF;-webkit-text-stroke-color:#0000FF">=&gt;</span> <span style="color:#0431FA;-webkit-text-stroke-color:#0431FA">{</span></div><div style="position:absolute;left:66.6px;top:238.9px;font:400 34.0px/34.0px 'Liberation Mono', monospace;letter-spacing:-0.70px;color:#6e7681;white-space:pre">12</div><div style="position:absolute;left:169.0px;top:237.4px;font:400 34.0px/34.0px 'Liberation Mono', monospace;letter-spacing:-0.70px;white-space:pre;-webkit-text-stroke:0.5px currentColor">      <span style="color:#AF00DB;-webkit-text-stroke-color:#AF00DB">if</span> <span style="color:#319331;-webkit-text-stroke-color:#319331">(</span><span style="color:#001080;-webkit-text-stroke-color:#001080">column</span><span style="color:#000000;-webkit-text-stroke-color:#000000">.</span><span style="color:#001080;-webkit-text-stroke-color:#001080">widthMode</span> <span style="color:#000000;-webkit-text-stroke-color:#000000">===</span> <span style="color:#267F99;-webkit-text-stroke-color:#267F99">TrackMode</span><span style="color:#000000;-webkit-text-stroke-color:#000000">.</span><span style="color:#0070C1;-webkit-text-stroke-color:#0070C1">minmax</span><span style="color:#319331;-webkit-text-stroke-color:#319331">)</span> <span style="color:#319331;-webkit-text-stroke-color:#319331">{</span></div><div style="position:absolute;left:66.6px;top:288.1px;font:400 34.0px/34.0px 'Liberation Mono', monospace;letter-spacing:-0.70px;color:#6e7681;white-space:pre">13</div><div style="position:absolute;left:169.0px;top:286.6px;font:400 34.0px/34.0px 'Liberation Mono', monospace;letter-spacing:-0.70px;white-space:pre;-webkit-text-stroke:0.5px currentColor">        <span style="color:#001080;-webkit-text-stroke-color:#001080">templateColumns</span><span style="color:#000000;-webkit-text-stroke-color:#000000">.</span><span style="color:#795E26;-webkit-text-stroke-color:#795E26">push</span><span style="color:#7B3814;-webkit-text-stroke-color:#7B3814">(</span><span style="color:#A31515;-webkit-text-stroke-color:#A31515">`</span><span style="color:#0000FF;-webkit-text-stroke-color:#0000FF">${</span><span style="color:#001080;-webkit-text-stroke-color:#001080">column</span><span style="color:#000000;-webkit-text-stroke-color:#000000">.</span><span style="color:#001080;-webkit-text-stroke-color:#001080">widthMode</span><span style="color:#0000FF;-webkit-text-stroke-color:#0000FF">}</span><span style="color:#A31515;-webkit-text-stroke-color:#A31515">(</span><span style="color:#0000FF;-webkit-text-stroke-color:#0000FF">${</span><span style="color:#001080;-webkit-text-stroke-color:#001080">column</span><span style="color:#000000;-webkit-text-stroke-color:#000000">.</span><span style="color:#001080;-webkit-text-stroke-color:#001080">widthValue</span><span style="color:#0000FF;-webkit-text-stroke-color:#0000FF">}</span><span style="color:#A31515;-webkit-text-stroke-color:#A31515">)</span><span style="color:#A31515;-webkit-text-stroke-color:#A31515">`</span><span style="color:#7B3814;-webkit-text-stroke-color:#7B3814">)</span><span style="color:#000000;-webkit-text-stroke-color:#000000">;</span></div><div style="position:absolute;left:66.6px;top:337.3px;font:400 34.0px/34.0px 'Liberation Mono', monospace;letter-spacing:-0.70px;color:#6e7681;white-space:pre">14</div><div style="position:absolute;left:169.0px;top:335.8px;font:400 34.0px/34.0px 'Liberation Mono', monospace;letter-spacing:-0.70px;white-space:pre;-webkit-text-stroke:0.5px currentColor">      <span style="color:#319331;-webkit-text-stroke-color:#319331">}</span></div><div style="position:absolute;left:66.6px;top:386.5px;font:400 34.0px/34.0px 'Liberation Mono', monospace;letter-spacing:-0.70px;color:#6e7681;white-space:pre">15</div><div style="position:absolute;left:169.0px;top:385.0px;font:400 34.0px/34.0px 'Liberation Mono', monospace;letter-spacing:-0.70px;white-space:pre;-webkit-text-stroke:0.5px currentColor">      <span style="color:#AF00DB;-webkit-text-stroke-color:#AF00DB">if</span> <span style="color:#319331;-webkit-text-stroke-color:#319331">(</span></div><div style="position:absolute;left:66.6px;top:435.7px;font:400 34.0px/34.0px 'Liberation Mono', monospace;letter-spacing:-0.70px;color:#6e7681;white-space:pre">16</div><div style="position:absolute;left:169.0px;top:434.2px;font:400 34.0px/34.0px 'Liberation Mono', monospace;letter-spacing:-0.70px;white-space:pre;-webkit-text-stroke:0.5px currentColor">        <span style="color:#001080;-webkit-text-stroke-color:#001080">column</span><span style="color:#000000;-webkit-text-stroke-color:#000000">.</span><span style="color:#001080;-webkit-text-stroke-color:#001080">widthMode</span> <span style="color:#000000;-webkit-text-stroke-color:#000000">===</span> <span style="color:#267F99;-webkit-text-stroke-color:#267F99">TrackMode</span><span style="color:#000000;-webkit-text-stroke-color:#000000">.</span><span style="color:#0070C1;-webkit-text-stroke-color:#0070C1">em</span> <span style="color:#000000;-webkit-text-stroke-color:#000000">||</span></div><div style="position:absolute;left:66.6px;top:484.9px;font:400 34.0px/34.0px 'Liberation Mono', monospace;letter-spacing:-0.70px;color:#6e7681;white-space:pre">17</div><div style="position:absolute;left:169.0px;top:483.4px;font:400 34.0px/34.0px 'Liberation Mono', monospace;letter-spacing:-0.70px;white-space:pre;-webkit-text-stroke:0.5px currentColor">        <span style="color:#001080;-webkit-text-stroke-color:#001080">column</span><span style="color:#000000;-webkit-text-stroke-color:#000000">.</span><span style="color:#001080;-webkit-text-stroke-color:#001080">widthMode</span> <span style="color:#000000;-webkit-text-stroke-color:#000000">===</span> <span style="color:#267F99;-webkit-text-stroke-color:#267F99">TrackMode</span><span style="color:#000000;-webkit-text-stroke-color:#000000">.</span><span style="color:#0070C1;-webkit-text-stroke-color:#0070C1">fr</span> <span style="color:#000000;-webkit-text-stroke-color:#000000">||</span></div><div style="position:absolute;left:66.6px;top:534.1px;font:400 34.0px/34.0px 'Liberation Mono', monospace;letter-spacing:-0.70px;color:#6e7681;white-space:pre">18</div><div style="position:absolute;left:169.0px;top:532.6px;font:400 34.0px/34.0px 'Liberation Mono', monospace;letter-spacing:-0.70px;white-space:pre;-webkit-text-stroke:0.5px currentColor">        <span style="color:#001080;-webkit-text-stroke-color:#001080">column</span><span style="color:#000000;-webkit-text-stroke-color:#000000">.</span><span style="color:#001080;-webkit-text-stroke-color:#001080">widthMode</span> <span style="color:#000000;-webkit-text-stroke-color:#000000">===</span> <span style="color:#267F99;-webkit-text-stroke-color:#267F99">TrackMode</span><span style="color:#000000;-webkit-text-stroke-color:#000000">.</span><span style="color:#0070C1;-webkit-text-stroke-color:#0070C1">percent</span> <span style="color:#000000;-webkit-text-stroke-color:#000000">||</span></div><div style="position:absolute;left:66.6px;top:583.3px;font:400 34.0px/34.0px 'Liberation Mono', monospace;letter-spacing:-0.70px;color:#6e7681;white-space:pre">19</div><div style="position:absolute;left:169.0px;top:581.8px;font:400 34.0px/34.0px 'Liberation Mono', monospace;letter-spacing:-0.70px;white-space:pre;-webkit-text-stroke:0.5px currentColor">        <span style="color:#001080;-webkit-text-stroke-color:#001080">column</span><span style="color:#000000;-webkit-text-stroke-color:#000000">.</span><span style="color:#001080;-webkit-text-stroke-color:#001080">widthMode</span> <span style="color:#000000;-webkit-text-stroke-color:#000000">===</span> <span style="color:#267F99;-webkit-text-stroke-color:#267F99">TrackMode</span><span style="color:#000000;-webkit-text-stroke-color:#000000">.</span><span style="color:#0070C1;-webkit-text-stroke-color:#0070C1">px</span></div><div style="position:absolute;left:66.6px;top:632.5px;font:400 34.0px/34.0px 'Liberation Mono', monospace;letter-spacing:-0.70px;color:#6e7681;white-space:pre">20</div><div style="position:absolute;left:169.0px;top:631.0px;font:400 34.0px/34.0px 'Liberation Mono', monospace;letter-spacing:-0.70px;white-space:pre;-webkit-text-stroke:0.5px currentColor">      <span style="color:#319331;-webkit-text-stroke-color:#319331">)</span> <span style="color:#319331;-webkit-text-stroke-color:#319331">{</span></div><div style="position:absolute;left:66.6px;top:681.7px;font:400 34.0px/34.0px 'Liberation Mono', monospace;letter-spacing:-0.70px;color:#6e7681;white-space:pre">21</div><div style="position:absolute;left:169.0px;top:680.2px;font:400 34.0px/34.0px 'Liberation Mono', monospace;letter-spacing:-0.70px;white-space:pre;-webkit-text-stroke:0.5px currentColor">        <span style="color:#001080;-webkit-text-stroke-color:#001080">templateColumns</span><span style="color:#000000;-webkit-text-stroke-color:#000000">.</span><span style="color:#795E26;-webkit-text-stroke-color:#795E26">push</span><span style="color:#7B3814;-webkit-text-stroke-color:#7B3814">(</span><span style="color:#A31515;-webkit-text-stroke-color:#A31515">`</span><span style="color:#0000FF;-webkit-text-stroke-color:#0000FF">${</span><span style="color:#001080;-webkit-text-stroke-color:#001080">column</span><span style="color:#000000;-webkit-text-stroke-color:#000000">.</span><span style="color:#001080;-webkit-text-stroke-color:#001080">widthValue</span><span style="color:#0000FF;-webkit-text-stroke-color:#0000FF">}</span><span style="color:#0000FF;-webkit-text-stroke-color:#0000FF">${</span><span style="color:#001080;-webkit-text-stroke-color:#001080">column</span><span style="color:#000000;-webkit-text-stroke-color:#000000">.</span><span style="color:#001080;-webkit-text-stroke-color:#001080">widthMode</span><span style="color:#0000FF;-webkit-text-stroke-color:#0000FF">}</span><span style="color:#A31515;-webkit-text-stroke-color:#A31515">`</span><span style="color:#7B3814;-webkit-text-stroke-color:#7B3814">)</span><span style="color:#000000;-webkit-text-stroke-color:#000000">;</span></div><div style="position:absolute;left:66.6px;top:730.9px;font:400 34.0px/34.0px 'Liberation Mono', monospace;letter-spacing:-0.70px;color:#6e7681;white-space:pre">22</div><div style="position:absolute;left:169.0px;top:729.4px;font:400 34.0px/34.0px 'Liberation Mono', monospace;letter-spacing:-0.70px;white-space:pre;-webkit-text-stroke:0.5px currentColor">      <span style="color:#319331;-webkit-text-stroke-color:#319331">}</span></div><div style="position:absolute;left:66.6px;top:780.1px;font:400 34.0px/34.0px 'Liberation Mono', monospace;letter-spacing:-0.70px;color:#6e7681;white-space:pre">23</div><div style="position:absolute;left:169.0px;top:778.6px;font:400 34.0px/34.0px 'Liberation Mono', monospace;letter-spacing:-0.70px;white-space:pre;-webkit-text-stroke:0.5px currentColor">    <span style="color:#0431FA;-webkit-text-stroke-color:#0431FA">}</span><span style="color:#7B3814;-webkit-text-stroke-color:#7B3814">)</span><span style="color:#000000;-webkit-text-stroke-color:#000000">;</span></div><div style="position:absolute;left:66.6px;top:829.3px;font:400 34.0px/34.0px 'Liberation Mono', monospace;letter-spacing:-0.70px;color:#6e7681;white-space:pre">24</div><div style="position:absolute;left:169.0px;top:827.8px;font:400 34.0px/34.0px 'Liberation Mono', monospace;letter-spacing:-0.70px;white-space:pre;-webkit-text-stroke:0.5px currentColor">    <span style="color:#0000FF;-webkit-text-stroke-color:#0000FF">let</span> <span style="color:#001080;-webkit-text-stroke-color:#001080">formattedColumns</span> <span style="color:#000000;-webkit-text-stroke-color:#000000">=</span> <span style="color:#001080;-webkit-text-stroke-color:#001080">templateColumns</span><span style="color:#000000;-webkit-text-stroke-color:#000000">.</span><span style="color:#795E26;-webkit-text-stroke-color:#795E26">join</span><span style="color:#7B3814;-webkit-text-stroke-color:#7B3814">(</span><span style="color:#A31515;-webkit-text-stroke-color:#A31515">' '</span><span style="color:#7B3814;-webkit-text-stroke-color:#7B3814">)</span><span style="color:#000000;-webkit-text-stroke-color:#000000">;</span></div><div style="position:absolute;left:66.6px;top:878.5px;font:400 34.0px/34.0px 'Liberation Mono', monospace;letter-spacing:-0.70px;color:#171184;white-space:pre">25</div><div style="position:absolute;left:169.0px;top:877.0px;font:400 34.0px/34.0px 'Liberation Mono', monospace;letter-spacing:-0.70px;white-space:pre;-webkit-text-stroke:0.5px currentColor">    <span style="color:#AF00DB;-webkit-text-stroke-color:#AF00DB">return</span> <span style="color:#001080;-webkit-text-stroke-color:#001080">formattedColumns</span><span style="color:#000000;-webkit-text-stroke-color:#000000">;</span></div><div style="position:absolute;left:66.6px;top:927.7px;font:400 34.0px/34.0px 'Liberation Mono', monospace;letter-spacing:-0.70px;color:#6e7681;white-space:pre">26</div><div style="position:absolute;left:169.0px;top:926.2px;font:400 34.0px/34.0px 'Liberation Mono', monospace;letter-spacing:-0.70px;white-space:pre;-webkit-text-stroke:0.5px currentColor">  <span style="color:#319331;-webkit-text-stroke-color:#319331">}</span><span style="color:#000000;-webkit-text-stroke-color:#000000">;</span></div><div style="position:absolute;left:66.6px;top:976.9px;font:400 34.0px/34.0px 'Liberation Mono', monospace;letter-spacing:-0.70px;color:#6e7681;white-space:pre">27</div><div style="position:absolute;left:169.0px;top:975.4px;font:400 34.0px/34.0px 'Liberation Mono', monospace;letter-spacing:-0.70px;white-space:pre;-webkit-text-stroke:0.5px currentColor"></div><div style="position:absolute;left:66.6px;top:1026.1px;font:400 34.0px/34.0px 'Liberation Mono', monospace;letter-spacing:-0.70px;color:#6e7681;white-space:pre">28</div><div style="position:absolute;left:169.0px;top:1024.6px;font:400 34.0px/34.0px 'Liberation Mono', monospace;letter-spacing:-0.70px;white-space:pre;-webkit-text-stroke:0.5px currentColor">  <span style="color:#0000FF;-webkit-text-stroke-color:#0000FF">const</span> <span style="color:#795E26;-webkit-text-stroke-color:#795E26">getTemplateRows</span> <span style="color:#000000;-webkit-text-stroke-color:#000000">=</span> <span style="color:#319331;-webkit-text-stroke-color:#319331">(</span><span style="color:#319331;-webkit-text-stroke-color:#319331">)</span> <span style="color:#0000FF;-webkit-text-stroke-color:#0000FF">=&gt;</span> <span style="color:#319331;-webkit-text-stroke-color:#319331">{</span></div><div style="position:absolute;left:66.6px;top:1075.3px;font:400 34.0px/34.0px 'Liberation Mono', monospace;letter-spacing:-0.70px;color:#6e7681;white-space:pre">29</div><div style="position:absolute;left:169.0px;top:1073.8px;font:400 34.0px/34.0px 'Liberation Mono', monospace;letter-spacing:-0.70px;white-space:pre;-webkit-text-stroke:0.5px currentColor">    <span style="color:#0000FF;-webkit-text-stroke-color:#0000FF">let</span> <span style="color:#001080;-webkit-text-stroke-color:#001080">templateRows</span><span style="color:#000000;-webkit-text-stroke-color:#000000">:</span> <span style="color:#267F99;-webkit-text-stroke-color:#267F99">any</span><span style="color:#7B3814;-webkit-text-stroke-color:#7B3814">[</span><span style="color:#7B3814;-webkit-text-stroke-color:#7B3814">]</span> <span style="color:#000000;-webkit-text-stroke-color:#000000">=</span> <span style="color:#7B3814;-webkit-text-stroke-color:#7B3814">[</span><span style="color:#7B3814;-webkit-text-stroke-color:#7B3814">]</span><span style="color:#000000;-webkit-text-stroke-color:#000000">;</span></div><div style="position:absolute;left:66.6px;top:1124.5px;font:400 34.0px/34.0px 'Liberation Mono', monospace;letter-spacing:-0.70px;color:#6e7681;white-space:pre">30</div><div style="position:absolute;left:169.0px;top:1123.0px;font:400 34.0px/34.0px 'Liberation Mono', monospace;letter-spacing:-0.70px;white-space:pre;-webkit-text-stroke:0.5px currentColor">    <span style="color:#001080;-webkit-text-stroke-color:#001080">gridState</span><span style="color:#000000;-webkit-text-stroke-color:#000000">.</span><span style="color:#001080;-webkit-text-stroke-color:#001080">rows</span><span style="color:#000000;-webkit-text-stroke-color:#000000">.</span><span style="color:#795E26;-webkit-text-stroke-color:#795E26">forEach</span><span style="color:#7B3814;-webkit-text-stroke-color:#7B3814">(</span><span style="color:#0431FA;-webkit-text-stroke-color:#0431FA">(</span><span style="color:#001080;-webkit-text-stroke-color:#001080">row</span><span style="color:#0431FA;-webkit-text-stroke-color:#0431FA">)</span> <span style="color:#0000FF;-webkit-text-stroke-color:#0000FF">=&gt;</span> <span style="color:#0431FA;-webkit-text-stroke-color:#0431FA">{</span></div><div style="position:absolute;left:66.6px;top:1173.7px;font:400 34.0px/34.0px 'Liberation Mono', monospace;letter-spacing:-0.70px;color:#6e7681;white-space:pre">31</div><div style="position:absolute;left:169.0px;top:1172.2px;font:400 34.0px/34.0px 'Liberation Mono', monospace;letter-spacing:-0.70px;white-space:pre;-webkit-text-stroke:0.5px currentColor">      <span style="color:#AF00DB;-webkit-text-stroke-color:#AF00DB">if</span> <span style="color:#319331;-webkit-text-stroke-color:#319331">(</span><span style="color:#001080;-webkit-text-stroke-color:#001080">row</span><span style="color:#000000;-webkit-text-stroke-color:#000000">.</span><span style="color:#001080;-webkit-text-stroke-color:#001080">heightMode</span> <span style="color:#000000;-webkit-text-stroke-color:#000000">===</span> <span style="color:#267F99;-webkit-text-stroke-color:#267F99">TrackMode</span><span style="color:#000000;-webkit-text-stroke-color:#000000">.</span><span style="color:#0070C1;-webkit-text-stroke-color:#0070C1">minmax</span><span style="color:#319331;-webkit-text-stroke-color:#319331">)</span> <span style="color:#319331;-webkit-text-stroke-color:#319331">{</span></div><div style="position:absolute;left:66.6px;top:1222.9px;font:400 34.0px/34.0px 'Liberation Mono', monospace;letter-spacing:-0.70px;color:#6e7681;white-space:pre">32</div><div style="position:absolute;left:169.0px;top:1221.4px;font:400 34.0px/34.0px 'Liberation Mono', monospace;letter-spacing:-0.70px;white-space:pre;-webkit-text-stroke:0.5px currentColor">        <span style="color:#001080;-webkit-text-stroke-color:#001080">templateRows</span><span style="color:#000000;-webkit-text-stroke-color:#000000">.</span><span style="color:#795E26;-webkit-text-stroke-color:#795E26">push</span><span style="color:#7B3814;-webkit-text-stroke-color:#7B3814">(</span><span style="color:#A31515;-webkit-text-stroke-color:#A31515">`</span><span style="color:#0000FF;-webkit-text-stroke-color:#0000FF">${</span><span style="color:#001080;-webkit-text-stroke-color:#001080">row</span><span style="color:#000000;-webkit-text-stroke-color:#000000">.</span><span style="color:#001080;-webkit-text-stroke-color:#001080">heightMode</span><span style="color:#0000FF;-webkit-text-stroke-color:#0000FF">}</span><span style="color:#A31515;-webkit-text-stroke-color:#A31515">(</span><span style="color:#0000FF;-webkit-text-stroke-color:#0000FF">${</span><span style="color:#001080;-webkit-text-stroke-color:#001080">row</span><span style="color:#000000;-webkit-text-stroke-color:#000000">.</span><span style="color:#001080;-webkit-text-stroke-color:#001080">heightValue</span><span style="color:#0000FF;-webkit-text-stroke-color:#0000FF">}</span><span style="color:#A31515;-webkit-text-stroke-color:#A31515">)</span><span style="color:#A31515;-webkit-text-stroke-color:#A31515">`</span><span style="color:#7B3814;-webkit-text-stroke-color:#7B3814">)</span><span style="color:#000000;-webkit-text-stroke-color:#000000">;</span></div><div style="position:absolute;left:66.6px;top:1272.1px;font:400 34.0px/34.0px 'Liberation Mono', monospace;letter-spacing:-0.70px;color:#6e7681;white-space:pre">33</div><div style="position:absolute;left:169.0px;top:1270.6px;font:400 34.0px/34.0px 'Liberation Mono', monospace;letter-spacing:-0.70px;white-space:pre;-webkit-text-stroke:0.5px currentColor">      <span style="color:#319331;-webkit-text-stroke-color:#319331">}</span></div><div style="position:absolute;left:66.6px;top:1321.3px;font:400 34.0px/34.0px 'Liberation Mono', monospace;letter-spacing:-0.70px;color:#6e7681;white-space:pre">34</div><div style="position:absolute;left:169.0px;top:1319.8px;font:400 34.0px/34.0px 'Liberation Mono', monospace;letter-spacing:-0.70px;white-space:pre;-webkit-text-stroke:0.5px currentColor">      <span style="color:#AF00DB;-webkit-text-stroke-color:#AF00DB">if</span> <span style="color:#319331;-webkit-text-stroke-color:#319331">(</span></div><div style="position:absolute;left:66.6px;top:1370.5px;font:400 34.0px/34.0px 'Liberation Mono', monospace;letter-spacing:-0.70px;color:#6e7681;white-space:pre">35</div><div style="position:absolute;left:169.0px;top:1369.0px;font:400 34.0px/34.0px 'Liberation Mono', monospace;letter-spacing:-0.70px;white-space:pre;-webkit-text-stroke:0.5px currentColor">        <span style="color:#001080;-webkit-text-stroke-color:#001080">row</span><span style="color:#000000;-webkit-text-stroke-color:#000000">.</span><span style="color:#001080;-webkit-text-stroke-color:#001080">heightMode</span> <span style="color:#000000;-webkit-text-stroke-color:#000000">===</span> <span style="color:#267F99;-webkit-text-stroke-color:#267F99">TrackMode</span><span style="color:#000000;-webkit-text-stroke-color:#000000">.</span><span style="color:#0070C1;-webkit-text-stroke-color:#0070C1">em</span> <span style="color:#000000;-webkit-text-stroke-color:#000000">||</span></div><div style="position:absolute;left:66.6px;top:1419.7px;font:400 34.0px/34.0px 'Liberation Mono', monospace;letter-spacing:-0.70px;color:#6e7681;white-space:pre">36</div><div style="position:absolute;left:169.0px;top:1418.2px;font:400 34.0px/34.0px 'Liberation Mono', monospace;letter-spacing:-0.70px;white-space:pre;-webkit-text-stroke:0.5px currentColor">        <span style="color:#001080;-webkit-text-stroke-color:#001080">row</span><span style="color:#000000;-webkit-text-stroke-color:#000000">.</span><span style="color:#001080;-webkit-text-stroke-color:#001080">heightMode</span> <span style="color:#000000;-webkit-text-stroke-color:#000000">===</span> <span style="color:#267F99;-webkit-text-stroke-color:#267F99">TrackMode</span><span style="color:#000000;-webkit-text-stroke-color:#000000">.</span><span style="color:#0070C1;-webkit-text-stroke-color:#0070C1">fr</span> <span style="color:#000000;-webkit-text-stroke-color:#000000">||</span></div><div style="position:absolute;left:0.0px;top:0.0px;width:1658.0px;height:6.0px;background:linear-gradient(rgba(0,0,0,0.08),rgba(0,0,0,0));"></div><div style="position:absolute;left:1626.0px;top:0.0px;width:32.0px;height:1426.0px;background:transparent;border-left:1px solid #e8e8e8;box-sizing:border-box"></div><div style="position:absolute;left:1626.0px;top:78.0px;width:32.0px;height:347.0px;background:#e3e3e4;"></div><div style="position:absolute;left:1626.0px;top:289.0px;width:32.0px;height:3.0px;background:#5a5a5a;"></div><div style="position:absolute;left:1637.0px;top:290.0px;width:11.0px;height:13.0px;background:#9a9a9a;"></div><div style="position:absolute;left:169.0px;top:1398.0px;width:1297.0px;height:28.0px;background:rgba(100,100,100,0.2);"></div></div><div style="position:absolute;left:0.0px;top:1590.0px;width:2412.0px;height:51.0px;background:#f8f8f8;"></div><div style="position:absolute;left:0.0px;top:1590.0px;width:2412.0px;height:2.0px;background:#e5e5e5;"></div><div style="position:absolute;left:0.0px;top:1590.0px;width:79.5px;height:51.0px;background:#2b64b8;"></div><svg style="position:absolute;left:29px;top:1601.5px;width:22px;height:29px;overflow:visible" viewBox="0 0 22 29" ><path d="M1.7 9 L10.2 17.7 L1.5 26.5 M19.8 0.8 L11.5 9.5 L19.8 17.7" fill="none" stroke="#fff" stroke-width="2.4" stroke-linecap="round"/></svg><svg style="position:absolute;left:101px;top:1600px;width:27px;height:32px;overflow:visible" viewBox="0 0 27 32" ><g fill="none" stroke="#3b3b3b" stroke-width="2.3"><circle cx="6" cy="5.5" r="4.2"/><circle cx="6" cy="26.5" r="4.2"/><circle cx="21" cy="10.5" r="4.2"/><path d="M6 9.7 V22.3 M21 14.7 C21 19 14 18.5 8 22"/></g></svg><div style="position:absolute;left:140.0px;top:1601.5px;font:400 29px/29px 'Liberation Sans', sans-serif;color:#3b3b3b;white-space:pre;">main*</div><svg style="position:absolute;left:253.5px;top:1603px;width:32px;height:28px;overflow:visible" viewBox="0 0 32 28" ><g fill="none" stroke="#3b3b3b" stroke-width="2.3" stroke-linejoin="round"><path d="M4.2 14.5 A11.5 11.5 0 1 1 26.8 14.5 M26.8 10.5 A11.5 11.5 0 1 1 4.2 10.5"/><path d="M22.5 11 L26.8 14.8 L30.5 10.5 M0.5 14.5 L4.2 10.2 L8.5 14"/></g></svg><svg style="position:absolute;left:325px;top:1601px;width:30px;height:30px;overflow:visible" viewBox="0 0 30 30" ><g fill="none" stroke="#3b3b3b" stroke-width="2.3"><circle cx="15" cy="15" r="13.2"/><path d="M9.5 9.5 L20.5 20.5 M20.5 9.5 L9.5 20.5"/></g></svg><div style="position:absolute;left:364.5px;top:1601.5px;font:400 29px/29px 'Liberation Sans', sans-serif;color:#3b3b3b;white-space:pre;">0</div><svg style="position:absolute;left:391px;top:1601px;width:30px;height:29px;overflow:visible" viewBox="0 0 30 29" ><g fill="none" stroke="#3b3b3b" stroke-width="2.3" stroke-linejoin="round"><path d="M15 2 L28.5 27 H1.5 Z"/><path d="M15 10 V19 M15 21.5 V24"/></g></svg><div style="position:absolute;left:431.5px;top:1601.5px;font:400 29px/29px 'Liberation Sans', sans-serif;color:#3b3b3b;white-space:pre;">0</div><div style="position:absolute;left:1990.0px;top:1602.1px;font:400 27px/27px 'Liberation Sans', sans-serif;color:#3b3b3b;white-space:pre;letter-spacing:-2px">{ }</div><div style="position:absolute;left:2035.0px;top:1601.3px;font:400 29.2px/29.2px 'Liberation Sans', sans-serif;color:#3b3b3b;white-space:pre;">TypeScript JSX</div><svg style="position:absolute;left:2273px;top:1602px;width:35px;height:32px;overflow:visible" viewBox="0 0 35 32" ><ellipse cx="17.4" cy="22" rx="16.4" ry="8.2" fill="#3b3b3b"/><rect x="7.5" y="15" width="20.5" height="11" rx="2" fill="#f8f8f8"/><g fill="#f8f8f8" stroke="#3b3b3b" stroke-width="2.6"><rect x="4.5" y="2.5" width="12" height="12.5" rx="5"/><rect x="18.3" y="2.5" width="12" height="12.5" rx="5"/></g><rect x="12.3" y="19" width="2.4" height="6.5" rx="1.2" fill="#3b3b3b"/><rect x="20" y="19" width="2.4" height="6.5" rx="1.2" fill="#3b3b3b"/></svg><svg style="position:absolute;left:2348px;top:1602px;width:26px;height:30px;overflow:visible" viewBox="0 0 26 30" ><g fill="none" stroke="#3b3b3b" stroke-width="2.3" stroke-linejoin="round"><path d="M4.5 23 V12.5 A8.5 8.5 0 0 1 21.5 12.5 V23 L24.5 25 H1.5 Z"/><path d="M10 26 A3 3 0 0 0 16 26"/></g></svg></div><div class="wd" style="position:absolute;left:175px;top:123px;width:2412px;height:1641px;border-radius:26px;box-shadow:0 0 0 1.5px rgba(0,0,0,0.8), 0 34px 110px 4px rgba(0,0,0,0.34), 0 12px 34px rgba(0,0,0,0.16)"><div style="position:absolute;inset:0;border-radius:26px;overflow:hidden"><div style="position:absolute;left:0.0px;top:0.0px;width:2412.0px;height:80.0px;background:#181818;"></div><div style="position:absolute;left:0.0px;top:80.0px;width:2412.0px;height:2.0px;background:#2b2b2b;"></div><div style="position:absolute;left:26.0px;top:28.0px;width:28.0px;height:28.0px;background:#ed6a5e;border-radius:50%"></div><div style="position:absolute;left:72.5px;top:28.0px;width:28.0px;height:28.0px;background:#f5bf4f;border-radius:50%"></div><div style="position:absolute;left:119.4px;top:28.0px;width:28.0px;height:28.0px;background:#62c554;border-radius:50%"></div><svg style="position:absolute;left:688px;top:28px;width:30px;height:26px;overflow:visible" viewBox="0 0 30 26" ><path d="M13 1.5 L1.8 13 L13 24.5 M1.8 13 H29.5" fill="none" stroke="#cccccc" stroke-width="2.4"/></svg><svg style="position:absolute;left:750px;top:28px;width:30px;height:26px;overflow:visible" viewBox="0 0 30 26" ><path d="M17 1.5 L28.2 13 L17 24.5 M28.2 13 H0.5" fill="none" stroke="#6f6f6f" stroke-width="2.4"/></svg><div style="position:absolute;left:814.0px;top:12.0px;width:920.0px;height:55.0px;background:#242424;border:2px solid #454545;box-sizing:border-box;border-radius:13px"></div><svg style="position:absolute;left:1149px;top:22px;width:34px;height:36px;overflow:visible" viewBox="0 0 34 36" ><g fill="none" stroke="#868686" stroke-width="2.4"><circle cx="20.5" cy="13" r="10.5"/><path d="M13.5 21 L1.5 34.5"/></g></svg><div style="position:absolute;left:1193.5px;top:24.7px;font:400 30.2px/30.2px 'Liberation Sans', sans-serif;color:#cccccc;white-space:pre;">grid-playground</div><svg style="position:absolute;left:2164px;top:23.5px;width:33px;height:33px;overflow:visible" viewBox="0 0 33 33" ><rect x="1.2" y="1.2" width="30.6" height="30.6" rx="2.5" fill="none" stroke="#cccccc" stroke-width="2.4"/><rect x="1.2" y="1.2" width="13" height="30.6" rx="2" fill="#cccccc"/></svg><svg style="position:absolute;left:2225px;top:23.5px;width:33px;height:33px;overflow:visible" viewBox="0 0 33 33" ><rect x="1.2" y="1.2" width="30.6" height="30.6" rx="2.5" fill="none" stroke="#cccccc" stroke-width="2.4"/><path d="M1.2 22 H31.8" stroke="#cccccc" stroke-width="2.4"/></svg><svg style="position:absolute;left:2285px;top:23.5px;width:33px;height:33px;overflow:visible" viewBox="0 0 33 33" ><rect x="1.2" y="1.2" width="30.6" height="30.6" rx="2.5" fill="none" stroke="#cccccc" stroke-width="2.4"/><path d="M19.5 1.2 V31.8" stroke="#cccccc" stroke-width="2.4"/></svg><svg style="position:absolute;left:2349px;top:23.5px;width:33px;height:33px;overflow:visible" viewBox="0 0 33 33" ><g fill="none" stroke="#cccccc" stroke-width="2.4"><rect x="1.2" y="3" width="11" height="27" rx="2"/><rect x="20" y="3" width="11" height="10" rx="2"/><rect x="20" y="20" width="11" height="10" rx="2"/></g></svg><div style="position:absolute;left:0.0px;top:82.0px;width:110.0px;height:1508.0px;background:#181818;"></div><div style="position:absolute;left:110.0px;top:82.0px;width:2.0px;height:1508.0px;background:#2b2b2b;"></div><div style="position:absolute;left:0.0px;top:82.0px;width:5.0px;height:111.0px;background:#3a7ed6;"></div><svg style="position:absolute;left:30.5px;top:110px;width:50px;height:56px;overflow:visible" viewBox="0 0 50 56" ><g fill="none" stroke="#d7d7d7" stroke-width="3.3" stroke-linejoin="round"><path d="M17 1.7 H34.5 L47.3 13 V39.5 a2.5 2.5 0 0 1-2.5 2.5 H19.5 a2.5 2.5 0 0 1-2.5-2.5 V4.2 a2.5 2.5 0 0 1 2.5-2.5 Z"/><path d="M34.5 1.7 V11 H47.3"/><path d="M17 15 H4.2 a2.5 2.5 0 0 0-2.5 2.5 V51.8 a2.5 2.5 0 0 0 2.5 2.5 H31.5 a2.5 2.5 0 0 0 2.5-2.5 V42"/></g></svg><svg style="position:absolute;left:30px;top:221px;width:56px;height:58px;overflow:visible" viewBox="0 0 56 58" ><g fill="none" stroke="#868686" stroke-width="3.4"><circle cx="33" cy="21" r="17"/><path d="M21 33 L2 55"/></g></svg><svg style="position:absolute;left:32.5px;top:333px;width:52px;height:56px;overflow:visible" viewBox="0 0 52 56" ><g fill="none" stroke="#868686" stroke-width="3.4"><circle cx="11" cy="9" r="7.5"/><circle cx="37" cy="20" r="7.5"/><circle cx="11" cy="47" r="7.5"/><path d="M11 16.5 V39.5"/><path d="M37 27.5 C37 34 30 35 20 35 C14 35 11 37 11 39.5"/></g></svg><div style="position:absolute;left:56.5px;top:362.5px;width:37.0px;height:37.0px;background:#3a7ed6;border-radius:50%"></div><div style="position:absolute;left:68.0px;top:372.4px;font:700 22px/22px 'Liberation Sans', sans-serif;color:#ffffff;white-space:pre;">1</div><svg style="position:absolute;left:27px;top:448px;width:62px;height:56px;overflow:visible" viewBox="0 0 62 56" ><g fill="none" stroke="#868686" stroke-width="3.4" stroke-linejoin="round"><path d="M19 20 V3 L57 26 L32 41"/><ellipse cx="17" cy="40" rx="9" ry="11"/><path d="M8 34 H26 M4 40 H30 M5 50 L10 46 M29 50 L24 46 M6 29 L11 32 M28 29 L23 32 M17 29 V51"/></g></svg><svg style="position:absolute;left:27px;top:558px;width:58px;height:58px;overflow:visible" viewBox="0 0 58 58" ><g fill="none" stroke="#868686" stroke-width="3.4" stroke-linejoin="round"><path d="M3 12 H22 V32 H42 V51 a2 2 0 0 1 -2 2 H5 a2 2 0 0 1 -2-2 Z"/><path d="M3 32 H22 V53"/><rect x="34" y="2" width="21" height="21" rx="2.5"/></g></svg><svg style="position:absolute;left:31px;top:674px;width:52px;height:50px;overflow:visible" viewBox="0 0 52 50" ><g fill="none" stroke="#868686" stroke-width="3.4" stroke-linejoin="round"><path d="M38 20 V3 H3 V30 H9 V38 L16 30"/><path d="M20 22 H49 V41 H44 L38 47 V41 H20 Z"/></g></svg><svg style="position:absolute;left:27px;top:1392px;width:58px;height:58px;overflow:visible" viewBox="0 0 58 58" ><g fill="none" stroke="#868686" stroke-width="3.6"><circle cx="29" cy="29" r="26.2"/><circle cx="29" cy="22.5" r="11"/><path d="M11.5 48.5 A19 16.5 0 0 1 46.5 48.5"/></g></svg><svg style="position:absolute;left:25px;top:1503px;width:62px;height:62px;overflow:visible" viewBox="0 0 62 62" ><g fill="none" stroke="#868686" stroke-width="3.6" stroke-linejoin="miter"><path d="M24.80 15.17 L26.49 5.39 L35.51 5.39 L37.20 15.17 L37.81 15.42 L45.91 9.70 L52.30 16.09 L46.58 24.19 L46.83 24.80 L56.61 26.49 L56.61 35.51 L46.83 37.20 L46.58 37.81 L52.30 45.91 L45.91 52.30 L37.81 46.58 L37.20 46.83 L35.51 56.61 L26.49 56.61 L24.80 46.83 L24.19 46.58 L16.09 52.30 L9.70 45.91 L15.42 37.81 L15.17 37.20 L5.39 35.51 L5.39 26.49 L15.17 24.80 L15.42 24.19 L9.70 16.09 L16.09 9.70 L24.19 15.42 Z"/><circle cx="31" cy="31" r="6.8"/></g></svg><div style="position:absolute;left:112.0px;top:82.0px;width:640.0px;height:1508.0px;background:#181818;"></div><div style="position:absolute;left:752.0px;top:82.0px;width:2.0px;height:1508.0px;background:#2b2b2b;"></div><div style="position:absolute;left:160.5px;top:110.7px;font:400 25.8px/25.8px 'Liberation Sans', sans-serif;color:#cccccc;white-space:pre;">EXPLORER</div><div style="position:absolute;left:684.0px;top:120.5px;width:5.0px;height:5.0px;background:#cccccc;border-radius:50%"></div><div style="position:absolute;left:695.5px;top:120.5px;width:5.0px;height:5.0px;background:#cccccc;border-radius:50%"></div><div style="position:absolute;left:707.0px;top:120.5px;width:5.0px;height:5.0px;background:#cccccc;border-radius:50%"></div><svg style="position:absolute;left:122.69999999999999px;top:182.7px;width:26px;height:16px;overflow:visible" viewBox="0 0 26 16" ><path d="M1.6 2.3 L13 13.7 L24.4 2.3" fill="none" stroke="#cccccc" stroke-width="2.1"/></svg><div style="position:absolute;left:159.7px;top:177.7px;font:700 25.8px/25.8px 'Liberation Sans', sans-serif;color:#cccccc;white-space:pre;">GRID-PLAYGROUND</div><div style="position:absolute;left:0;top:0;width:2412px;height:1539.5px;overflow:hidden"><svg style="position:absolute;left:159.5px;top:227.20000000000002px;width:16px;height:28px;overflow:visible" viewBox="0 0 16 28" ><path d="M2.4 3.2 L13.6 14 L2.4 24.8" fill="none" stroke="#cccccc" stroke-width="2.1"/></svg><div style="position:absolute;left:192.9px;top:226.6px;font:400 31.5px/31.5px 'Liberation Sans', sans-serif;color:#cccccc;white-space:pre;">.vscode</div><svg style="position:absolute;left:159.5px;top:278.74px;width:16px;height:28px;overflow:visible" viewBox="0 0 16 28" ><path d="M2.4 3.2 L13.6 14 L2.4 24.8" fill="none" stroke="#cccccc" stroke-width="2.1"/></svg><div style="position:absolute;left:192.9px;top:278.2px;font:400 31.5px/31.5px 'Liberation Sans', sans-serif;color:#8c8c8c;white-space:pre;">build</div><svg style="position:absolute;left:159.5px;top:330.28px;width:16px;height:28px;overflow:visible" viewBox="0 0 16 28" ><path d="M2.4 3.2 L13.6 14 L2.4 24.8" fill="none" stroke="#cccccc" stroke-width="2.1"/></svg><div style="position:absolute;left:192.9px;top:329.7px;font:400 31.5px/31.5px 'Liberation Sans', sans-serif;color:#8c8c8c;white-space:pre;">node_modules</div><svg style="position:absolute;left:159.5px;top:381.82px;width:16px;height:28px;overflow:visible" viewBox="0 0 16 28" ><path d="M2.4 3.2 L13.6 14 L2.4 24.8" fill="none" stroke="#cccccc" stroke-width="2.1"/></svg><div style="position:absolute;left:192.9px;top:381.3px;font:400 31.5px/31.5px 'Liberation Sans', sans-serif;color:#cccccc;white-space:pre;">public</div><svg style="position:absolute;left:154.0px;top:440.96000000000004px;width:26px;height:16px;overflow:visible" viewBox="0 0 26 16" ><path d="M1.6 2.3 L13 13.7 L24.4 2.3" fill="none" stroke="#cccccc" stroke-width="2.1"/></svg><div style="position:absolute;left:192.9px;top:432.8px;font:400 31.5px/31.5px 'Liberation Sans', sans-serif;color:#E2C08D;white-space:pre;">src</div><div style="position:absolute;left:693.5px;top:439.0px;width:18.0px;height:18.0px;background:#7a6c55;border-radius:50%"></div><svg style="position:absolute;left:172.7px;top:492.5px;width:26px;height:16px;overflow:visible" viewBox="0 0 26 16" ><path d="M1.6 2.3 L13 13.7 L24.4 2.3" fill="none" stroke="#cccccc" stroke-width="2.1"/></svg><div style="position:absolute;left:211.5px;top:484.3px;font:400 31.5px/31.5px 'Liberation Sans', sans-serif;color:#E2C08D;white-space:pre;">components</div><div style="position:absolute;left:693.5px;top:490.5px;width:18.0px;height:18.0px;background:#7a6c55;border-radius:50%"></div><svg style="position:absolute;left:196.9px;top:536.4399999999999px;width:16px;height:28px;overflow:visible" viewBox="0 0 16 28" ><path d="M2.4 3.2 L13.6 14 L2.4 24.8" fill="none" stroke="#cccccc" stroke-width="2.1"/></svg><div style="position:absolute;left:230.3px;top:535.9px;font:400 31.5px/31.5px 'Liberation Sans', sans-serif;color:#cccccc;white-space:pre;">app</div><svg style="position:absolute;left:191.4px;top:595.5799999999999px;width:26px;height:16px;overflow:visible" viewBox="0 0 26 16" ><path d="M1.6 2.3 L13 13.7 L24.4 2.3" fill="none" stroke="#cccccc" stroke-width="2.1"/></svg><div style="position:absolute;left:230.3px;top:587.4px;font:400 31.5px/31.5px 'Liberation Sans', sans-serif;color:#cccccc;white-space:pre;">button</div><svg style="position:absolute;left:196.9px;top:639.52px;width:16px;height:28px;overflow:visible" viewBox="0 0 16 28" ><path d="M2.4 3.2 L13.6 14 L2.4 24.8" fill="none" stroke="#cccccc" stroke-width="2.1"/></svg><div style="position:absolute;left:230.3px;top:639.0px;font:400 31.5px/31.5px 'Liberation Sans', sans-serif;color:#cccccc;white-space:pre;">code-sidebar</div><svg style="position:absolute;left:191.4px;top:698.6600000000001px;width:26px;height:16px;overflow:visible" viewBox="0 0 26 16" ><path d="M1.6 2.3 L13 13.7 L24.4 2.3" fill="none" stroke="#cccccc" stroke-width="2.1"/></svg><div style="position:absolute;left:230.3px;top:690.5px;font:400 31.5px/31.5px 'Liberation Sans', sans-serif;color:#E2C08D;white-space:pre;">container-editor</div><div style="position:absolute;left:693.5px;top:696.7px;width:18.0px;height:18.0px;background:#7a6c55;border-radius:50%"></div><svg style="position:absolute;left:208.2px;top:746.2px;width:22px;height:21px;overflow:visible" viewBox="0 0 22 21" ><path d="M8.2 0.5 L6 20.5 M16.2 0.5 L14 20.5 M1.5 6.8 H21 M0.8 14.2 H20.3" stroke="#519aba" stroke-width="3.4" fill="none"/></svg><div style="position:absolute;left:249.0px;top:742.0px;font:400 31.5px/31.5px 'Liberation Sans', sans-serif;color:#cccccc;white-space:pre;">ContainerEditor.css</div><div style="position:absolute;left:204.5px;top:797.2px;font:700 22.5px/22.5px 'Liberation Sans', sans-serif;color:#519aba;white-space:pre;letter-spacing:0.5px">TS</div><div style="position:absolute;left:249.0px;top:793.6px;font:400 31.5px/31.5px 'Liberation Sans', sans-serif;color:#E2C08D;white-space:pre;">ContainerEditor.tsx</div><div style="position:absolute;left:690.5px;top:797.4px;font:700 27px/27px 'Liberation Sans', sans-serif;color:#E2C08D;white-space:pre;">M</div><svg style="position:absolute;left:196.9px;top:845.68px;width:16px;height:28px;overflow:visible" viewBox="0 0 16 28" ><path d="M2.4 3.2 L13.6 14 L2.4 24.8" fill="none" stroke="#cccccc" stroke-width="2.1"/></svg><div style="position:absolute;left:230.3px;top:845.1px;font:400 31.5px/31.5px 'Liberation Sans', sans-serif;color:#cccccc;white-space:pre;">editor-section</div><svg style="position:absolute;left:196.9px;top:897.2199999999999px;width:16px;height:28px;overflow:visible" viewBox="0 0 16 28" ><path d="M2.4 3.2 L13.6 14 L2.4 24.8" fill="none" stroke="#cccccc" stroke-width="2.1"/></svg><div style="position:absolute;left:230.3px;top:896.7px;font:400 31.5px/31.5px 'Liberation Sans', sans-serif;color:#cccccc;white-space:pre;">editor-sidebar</div><svg style="position:absolute;left:196.9px;top:948.7599999999999px;width:16px;height:28px;overflow:visible" viewBox="0 0 16 28" ><path d="M2.4 3.2 L13.6 14 L2.4 24.8" fill="none" stroke="#cccccc" stroke-width="2.1"/></svg><div style="position:absolute;left:230.3px;top:948.2px;font:400 31.5px/31.5px 'Liberation Sans', sans-serif;color:#cccccc;white-space:pre;">gap-editor</div><svg style="position:absolute;left:191.4px;top:1007.9000000000001px;width:26px;height:16px;overflow:visible" viewBox="0 0 26 16" ><path d="M1.6 2.3 L13 13.7 L24.4 2.3" fill="none" stroke="#cccccc" stroke-width="2.1"/></svg><div style="position:absolute;left:230.3px;top:999.7px;font:400 31.5px/31.5px 'Liberation Sans', sans-serif;color:#cccccc;white-space:pre;">grid</div><div style="position:absolute;left:112.0px;top:1040.4px;width:639.0px;height:50.5px;background:#37373d;"></div><div style="position:absolute;left:197.0px;top:1040.4px;width:2.0px;height:50.5px;background:#585858;"></div><div style="position:absolute;left:204.5px;top:1054.9px;font:700 22.5px/22.5px 'Liberation Sans', sans-serif;color:#519aba;white-space:pre;letter-spacing:0.5px">TS</div><div style="position:absolute;left:249.0px;top:1051.3px;font:400 31.5px/31.5px 'Liberation Sans', sans-serif;color:#cccccc;white-space:pre;">Grid.tsx</div><svg style="position:absolute;left:191.4px;top:1110.98px;width:26px;height:16px;overflow:visible" viewBox="0 0 26 16" ><path d="M1.6 2.3 L13 13.7 L24.4 2.3" fill="none" stroke="#cccccc" stroke-width="2.1"/></svg><div style="position:absolute;left:230.3px;top:1102.8px;font:400 31.5px/31.5px 'Liberation Sans', sans-serif;color:#cccccc;white-space:pre;">grid-tracks-editor</div><svg style="position:absolute;left:208.2px;top:1158.52px;width:22px;height:21px;overflow:visible" viewBox="0 0 22 21" ><path d="M8.2 0.5 L6 20.5 M16.2 0.5 L14 20.5 M1.5 6.8 H21 M0.8 14.2 H20.3" stroke="#519aba" stroke-width="3.4" fill="none"/></svg><div style="position:absolute;left:249.0px;top:1154.4px;font:400 31.5px/31.5px 'Liberation Sans', sans-serif;color:#cccccc;white-space:pre;">GridTracksEditor.css</div><div style="position:absolute;left:204.5px;top:1209.5px;font:700 22.5px/22.5px 'Liberation Sans', sans-serif;color:#519aba;white-space:pre;letter-spacing:0.5px">TS</div><div style="position:absolute;left:249.0px;top:1205.9px;font:400 31.5px/31.5px 'Liberation Sans', sans-serif;color:#cccccc;white-space:pre;">GridTracksEditor.tsx</div><svg style="position:absolute;left:196.9px;top:1258.0px;width:16px;height:28px;overflow:visible" viewBox="0 0 16 28" ><path d="M2.4 3.2 L13.6 14 L2.4 24.8" fill="none" stroke="#cccccc" stroke-width="2.1"/></svg><div style="position:absolute;left:230.3px;top:1257.4px;font:400 31.5px/31.5px 'Liberation Sans', sans-serif;color:#cccccc;white-space:pre;">header</div><svg style="position:absolute;left:196.9px;top:1309.54px;width:16px;height:28px;overflow:visible" viewBox="0 0 16 28" ><path d="M2.4 3.2 L13.6 14 L2.4 24.8" fill="none" stroke="#cccccc" stroke-width="2.1"/></svg><div style="position:absolute;left:230.3px;top:1309.0px;font:400 31.5px/31.5px 'Liberation Sans', sans-serif;color:#cccccc;white-space:pre;">input-group</div><svg style="position:absolute;left:196.9px;top:1361.08px;width:16px;height:28px;overflow:visible" viewBox="0 0 16 28" ><path d="M2.4 3.2 L13.6 14 L2.4 24.8" fill="none" stroke="#cccccc" stroke-width="2.1"/></svg><div style="position:absolute;left:230.3px;top:1360.5px;font:400 31.5px/31.5px 'Liberation Sans', sans-serif;color:#cccccc;white-space:pre;">text-input</div><svg style="position:absolute;left:178.2px;top:1412.6200000000001px;width:16px;height:28px;overflow:visible" viewBox="0 0 16 28" ><path d="M2.4 3.2 L13.6 14 L2.4 24.8" fill="none" stroke="#cccccc" stroke-width="2.1"/></svg><div style="position:absolute;left:211.5px;top:1412.1px;font:400 31.5px/31.5px 'Liberation Sans', sans-serif;color:#cccccc;white-space:pre;">icons</div><svg style="position:absolute;left:178.2px;top:1464.16px;width:16px;height:28px;overflow:visible" viewBox="0 0 16 28" ><path d="M2.4 3.2 L13.6 14 L2.4 24.8" fill="none" stroke="#cccccc" stroke-width="2.1"/></svg><div style="position:absolute;left:211.5px;top:1463.6px;font:400 31.5px/31.5px 'Liberation Sans', sans-serif;color:#cccccc;white-space:pre;">styles</div><svg style="position:absolute;left:170.7px;top:1519.3px;width:22px;height:21px;overflow:visible" viewBox="0 0 22 21" ><path d="M8.2 0.5 L6 20.5 M16.2 0.5 L14 20.5 M1.5 6.8 H21 M0.8 14.2 H20.3" stroke="#519aba" stroke-width="3.4" fill="none"/></svg><div style="position:absolute;left:211.5px;top:1515.1px;font:400 31.5px/31.5px 'Liberation Sans', sans-serif;color:#cccccc;white-space:pre;">index.css</div></div><div style="position:absolute;left:112.0px;top:1539.5px;width:640.0px;height:2.0px;background:#2b2b2b;"></div><svg style="position:absolute;left:128.5px;top:1551px;width:16px;height:28px;overflow:visible" viewBox="0 0 16 28" ><path d="M2.4 3.2 L13.6 14 L2.4 24.8" fill="none" stroke="#cccccc" stroke-width="2.1"/></svg><div style="position:absolute;left:160.6px;top:1553.0px;font:700 25.8px/25.8px 'Liberation Sans', sans-serif;color:#cccccc;white-space:pre;">TIMELINE</div><div style="position:absolute;left:754.0px;top:82.0px;width:1658.0px;height:80.0px;background:#181818;"></div><div style="position:absolute;left:754.0px;top:162.0px;width:1658.0px;height:2.0px;background:#2b2b2b;"></div><div style="position:absolute;left:754.0px;top:82.0px;width:279.0px;height:82.0px;background:#1f1f1f;"></div><div style="position:absolute;left:754.0px;top:82.0px;width:279.0px;height:2.6px;background:#3a7ed6;"></div><div style="position:absolute;left:786.3px;top:112.7px;font:700 23px/23px 'Liberation Sans', sans-serif;color:#519aba;white-space:pre;letter-spacing:0.5px">TS</div><div style="position:absolute;left:829.3px;top:109.1px;font:400 31.2px/31.2px 'Liberation Sans', sans-serif;color:#ffffff;white-space:pre;">Grid.tsx</div><svg style="position:absolute;left:989px;top:113.5px;width:22px;height:22px;overflow:visible" viewBox="0 0 22 22" ><path d="M1.5 1.5 L20.5 20.5 M20.5 1.5 L1.5 20.5" stroke="#cccccc" stroke-width="2.5"/></svg><div style="position:absolute;left:1033.0px;top:82.0px;width:2.0px;height:80.0px;background:#2b2b2b;"></div><div style="position:absolute;left:1406.0px;top:82.0px;width:2.0px;height:80.0px;background:#2b2b2b;"></div><div style="position:absolute;left:1068.0px;top:112.7px;font:700 23px/23px 'Liberation Sans', sans-serif;color:#519aba;white-space:pre;letter-spacing:0.5px">TS</div><div style="position:absolute;left:1110.0px;top:109.1px;font:400 31.2px/31.2px 'Liberation Sans', sans-serif;color:#909090;white-space:pre;">CodeSidebar.tsx</div><svg style="position:absolute;left:2283.5px;top:107px;width:30px;height:30px;overflow:visible" viewBox="0 0 30 30" ><g fill="none" stroke="#cccccc" stroke-width="2.4"><rect x="1.2" y="1.2" width="27.6" height="27.6" rx="2.5"/><path d="M15 1.2 V28.8"/></g></svg><div style="position:absolute;left:2346.0px;top:120.5px;width:5.0px;height:5.0px;background:#cccccc;border-radius:50%"></div><div style="position:absolute;left:2357.5px;top:120.5px;width:5.0px;height:5.0px;background:#cccccc;border-radius:50%"></div><div style="position:absolute;left:2369.0px;top:120.5px;width:5.0px;height:5.0px;background:#cccccc;border-radius:50%"></div><div style="position:absolute;left:754px;top:164px;width:1658px;height:1426px;overflow:hidden"><div style="position:absolute;left:0.0px;top:0.0px;width:1658.0px;height:1426.0px;background:#1f1f1f;"></div><div style="position:absolute;left:171.0px;top:1044.9px;width:1455.0px;height:49.6px;background:transparent;border-top:4.6px solid #282828;border-bottom:4.6px solid #282828;box-sizing:border-box"></div><div style="position:absolute;left:169.5px;top:110.1px;width:2.0px;height:49.4px;background:#404040;"></div><div style="position:absolute;left:169.5px;top:159.3px;width:2.0px;height:49.4px;background:#404040;"></div><div style="position:absolute;left:169.5px;top:208.5px;width:2.0px;height:49.4px;background:#404040;"></div><div style="position:absolute;left:169.5px;top:257.7px;width:2.0px;height:49.4px;background:#404040;"></div><div style="position:absolute;left:169.5px;top:306.9px;width:2.0px;height:49.4px;background:#404040;"></div><div style="position:absolute;left:169.5px;top:356.1px;width:2.0px;height:49.4px;background:#404040;"></div><div style="position:absolute;left:169.5px;top:405.3px;width:2.0px;height:49.4px;background:#404040;"></div><div style="position:absolute;left:169.5px;top:454.5px;width:2.0px;height:49.4px;background:#404040;"></div><div style="position:absolute;left:169.5px;top:503.7px;width:2.0px;height:49.4px;background:#404040;"></div><div style="position:absolute;left:169.5px;top:552.9px;width:2.0px;height:49.4px;background:#404040;"></div><div style="position:absolute;left:169.5px;top:602.1px;width:2.0px;height:49.4px;background:#404040;"></div><div style="position:absolute;left:169.5px;top:651.3px;width:2.0px;height:49.4px;background:#404040;"></div><div style="position:absolute;left:169.5px;top:700.5px;width:2.0px;height:49.4px;background:#404040;"></div><div style="position:absolute;left:169.5px;top:749.7px;width:2.0px;height:49.4px;background:#404040;"></div><div style="position:absolute;left:169.5px;top:798.9px;width:2.0px;height:49.4px;background:#404040;"></div><div style="position:absolute;left:169.5px;top:848.1px;width:2.0px;height:49.4px;background:#404040;"></div><div style="position:absolute;left:169.5px;top:897.3px;width:2.0px;height:49.4px;background:#404040;"></div><div style="position:absolute;left:169.5px;top:946.5px;width:2.0px;height:49.4px;background:#404040;"></div><div style="position:absolute;left:169.5px;top:995.7px;width:2.0px;height:49.4px;background:#404040;"></div><div style="position:absolute;left:169.5px;top:1044.9px;width:2.0px;height:49.4px;background:#404040;"></div><div style="position:absolute;left:169.5px;top:1094.1px;width:2.0px;height:49.4px;background:#404040;"></div><div style="position:absolute;left:169.5px;top:1143.3px;width:2.0px;height:49.4px;background:#404040;"></div><div style="position:absolute;left:169.5px;top:1192.5px;width:2.0px;height:49.4px;background:#404040;"></div><div style="position:absolute;left:169.5px;top:1241.7px;width:2.0px;height:49.4px;background:#404040;"></div><div style="position:absolute;left:169.5px;top:1290.9px;width:2.0px;height:49.4px;background:#404040;"></div><div style="position:absolute;left:169.5px;top:1340.1px;width:2.0px;height:49.4px;background:#404040;"></div><div style="position:absolute;left:169.5px;top:1389.3px;width:2.0px;height:49.4px;background:#404040;"></div><div style="position:absolute;left:169.5px;top:1438.5px;width:2.0px;height:49.4px;background:#404040;"></div><div style="position:absolute;left:208.9px;top:159.3px;width:2.0px;height:49.4px;background:#404040;"></div><div style="position:absolute;left:208.9px;top:208.5px;width:2.0px;height:49.4px;background:#404040;"></div><div style="position:absolute;left:208.9px;top:257.7px;width:2.0px;height:49.4px;background:#404040;"></div><div style="position:absolute;left:208.9px;top:306.9px;width:2.0px;height:49.4px;background:#404040;"></div><div style="position:absolute;left:208.9px;top:356.1px;width:2.0px;height:49.4px;background:#404040;"></div><div style="position:absolute;left:208.9px;top:405.3px;width:2.0px;height:49.4px;background:#404040;"></div><div style="position:absolute;left:208.9px;top:454.5px;width:2.0px;height:49.4px;background:#404040;"></div><div style="position:absolute;left:208.9px;top:503.7px;width:2.0px;height:49.4px;background:#404040;"></div><div style="position:absolute;left:208.9px;top:552.9px;width:2.0px;height:49.4px;background:#404040;"></div><div style="position:absolute;left:208.9px;top:602.1px;width:2.0px;height:49.4px;background:#404040;"></div><div style="position:absolute;left:208.9px;top:651.3px;width:2.0px;height:49.4px;background:#404040;"></div><div style="position:absolute;left:208.9px;top:700.5px;width:2.0px;height:49.4px;background:#404040;"></div><div style="position:absolute;left:208.9px;top:749.7px;width:2.0px;height:49.4px;background:#404040;"></div><div style="position:absolute;left:208.9px;top:798.9px;width:2.0px;height:49.4px;background:#404040;"></div><div style="position:absolute;left:208.9px;top:848.1px;width:2.0px;height:49.4px;background:#404040;"></div><div style="position:absolute;left:208.9px;top:897.3px;width:2.0px;height:49.4px;background:#404040;"></div><div style="position:absolute;left:208.9px;top:1094.1px;width:2.0px;height:49.4px;background:#707070;"></div><div style="position:absolute;left:208.9px;top:1143.3px;width:2.0px;height:49.4px;background:#707070;"></div><div style="position:absolute;left:208.9px;top:1192.5px;width:2.0px;height:49.4px;background:#707070;"></div><div style="position:absolute;left:208.9px;top:1241.7px;width:2.0px;height:49.4px;background:#707070;"></div><div style="position:absolute;left:208.9px;top:1290.9px;width:2.0px;height:49.4px;background:#707070;"></div><div style="position:absolute;left:208.9px;top:1340.1px;width:2.0px;height:49.4px;background:#707070;"></div><div style="position:absolute;left:208.9px;top:1389.3px;width:2.0px;height:49.4px;background:#707070;"></div><div style="position:absolute;left:208.9px;top:1438.5px;width:2.0px;height:49.4px;background:#707070;"></div><div style="position:absolute;left:248.3px;top:257.7px;width:2.0px;height:49.4px;background:#404040;"></div><div style="position:absolute;left:248.3px;top:306.9px;width:2.0px;height:49.4px;background:#404040;"></div><div style="position:absolute;left:248.3px;top:356.1px;width:2.0px;height:49.4px;background:#404040;"></div><div style="position:absolute;left:248.3px;top:405.3px;width:2.0px;height:49.4px;background:#404040;"></div><div style="position:absolute;left:248.3px;top:454.5px;width:2.0px;height:49.4px;background:#404040;"></div><div style="position:absolute;left:248.3px;top:503.7px;width:2.0px;height:49.4px;background:#404040;"></div><div style="position:absolute;left:248.3px;top:552.9px;width:2.0px;height:49.4px;background:#404040;"></div><div style="position:absolute;left:248.3px;top:602.1px;width:2.0px;height:49.4px;background:#404040;"></div><div style="position:absolute;left:248.3px;top:651.3px;width:2.0px;height:49.4px;background:#404040;"></div><div style="position:absolute;left:248.3px;top:700.5px;width:2.0px;height:49.4px;background:#404040;"></div><div style="position:absolute;left:248.3px;top:749.7px;width:2.0px;height:49.4px;background:#404040;"></div><div style="position:absolute;left:248.3px;top:1192.5px;width:2.0px;height:49.4px;background:#404040;"></div><div style="position:absolute;left:248.3px;top:1241.7px;width:2.0px;height:49.4px;background:#404040;"></div><div style="position:absolute;left:248.3px;top:1290.9px;width:2.0px;height:49.4px;background:#404040;"></div><div style="position:absolute;left:248.3px;top:1340.1px;width:2.0px;height:49.4px;background:#404040;"></div><div style="position:absolute;left:248.3px;top:1389.3px;width:2.0px;height:49.4px;background:#404040;"></div><div style="position:absolute;left:248.3px;top:1438.5px;width:2.0px;height:49.4px;background:#404040;"></div><div style="position:absolute;left:287.7px;top:306.9px;width:2.0px;height:49.4px;background:#404040;"></div><div style="position:absolute;left:287.7px;top:454.5px;width:2.0px;height:49.4px;background:#404040;"></div><div style="position:absolute;left:287.7px;top:503.7px;width:2.0px;height:49.4px;background:#404040;"></div><div style="position:absolute;left:287.7px;top:552.9px;width:2.0px;height:49.4px;background:#404040;"></div><div style="position:absolute;left:287.7px;top:602.1px;width:2.0px;height:49.4px;background:#404040;"></div><div style="position:absolute;left:287.7px;top:700.5px;width:2.0px;height:49.4px;background:#404040;"></div><div style="position:absolute;left:287.7px;top:1241.7px;width:2.0px;height:49.4px;background:#404040;"></div><div style="position:absolute;left:287.7px;top:1389.3px;width:2.0px;height:49.4px;background:#404040;"></div><div style="position:absolute;left:287.7px;top:1438.5px;width:2.0px;height:49.4px;background:#404040;"></div><div style="position:absolute;left:86.3px;top:-28.8px;font:400 34.0px/34.0px 'Liberation Mono', monospace;letter-spacing:-0.70px;color:#6e7681;white-space:pre">6</div><div style="position:absolute;left:86.3px;top:20.4px;font:400 34.0px/34.0px 'Liberation Mono', monospace;letter-spacing:-0.70px;color:#6e7681;white-space:pre">7</div><div style="position:absolute;left:169.0px;top:18.9px;font:400 34.0px/34.0px 'Liberation Mono', monospace;letter-spacing:-0.70px;white-space:pre;-webkit-text-stroke:0.7px currentColor"></div><div style="position:absolute;left:86.3px;top:69.6px;font:400 34.0px/34.0px 'Liberation Mono', monospace;letter-spacing:-0.70px;color:#6e7681;white-space:pre">8</div><div style="position:absolute;left:169.0px;top:68.1px;font:400 34.0px/34.0px 'Liberation Mono', monospace;letter-spacing:-0.70px;white-space:pre;-webkit-text-stroke:0.7px currentColor"><span style="color:#C586C0;-webkit-text-stroke-color:#C586C0">export</span> <span style="color:#569CD6;-webkit-text-stroke-color:#569CD6">const</span> <span style="color:#DCDCAA;-webkit-text-stroke-color:#DCDCAA">Grid</span> <span style="color:#CCCCCC;-webkit-text-stroke-color:#CCCCCC">=</span> <span style="color:#F5D33A;-webkit-text-stroke-color:#F5D33A">(</span><span style="color:#D470D4;-webkit-text-stroke-color:#D470D4">{</span> <span style="color:#9CDCFE;-webkit-text-stroke-color:#9CDCFE">gridState</span><span style="color:#CCCCCC;-webkit-text-stroke-color:#CCCCCC">,</span> <span style="color:#9CDCFE;-webkit-text-stroke-color:#9CDCFE">className</span> <span style="color:#D470D4;-webkit-text-stroke-color:#D470D4">}</span><span style="color:#CCCCCC;-webkit-text-stroke-color:#CCCCCC">:</span> <span style="color:#4EC9B0;-webkit-text-stroke-color:#4EC9B0">IGridProps</span><span style="color:#F5D33A;-webkit-text-stroke-color:#F5D33A">)</span> <span style="color:#569CD6;-webkit-text-stroke-color:#569CD6">=&gt;</span> <span style="color:#F5D33A;-webkit-text-stroke-color:#F5D33A">{</span></div><div style="position:absolute;left:86.3px;top:118.8px;font:400 34.0px/34.0px 'Liberation Mono', monospace;letter-spacing:-0.70px;color:#6e7681;white-space:pre">9</div><div style="position:absolute;left:169.0px;top:117.3px;font:400 34.0px/34.0px 'Liberation Mono', monospace;letter-spacing:-0.70px;white-space:pre;-webkit-text-stroke:0.7px currentColor">  <span style="color:#569CD6;-webkit-text-stroke-color:#569CD6">const</span> <span style="color:#DCDCAA;-webkit-text-stroke-color:#DCDCAA">getTemplateColumns</span> <span style="color:#CCCCCC;-webkit-text-stroke-color:#CCCCCC">=</span> <span style="color:#D470D4;-webkit-text-stroke-color:#D470D4">(</span><span style="color:#D470D4;-webkit-text-stroke-color:#D470D4">)</span> <span style="color:#569CD6;-webkit-text-stroke-color:#569CD6">=&gt;</span> <span style="color:#D470D4;-webkit-text-stroke-color:#D470D4">{</span></div><div style="position:absolute;left:66.6px;top:168.0px;font:400 34.0px/34.0px 'Liberation Mono', monospace;letter-spacing:-0.70px;color:#6e7681;white-space:pre">10</div><div style="position:absolute;left:169.0px;top:166.5px;font:400 34.0px/34.0px 'Liberation Mono', monospace;letter-spacing:-0.70px;white-space:pre;-webkit-text-stroke:0.7px currentColor">    <span style="color:#569CD6;-webkit-text-stroke-color:#569CD6">let</span> <span style="color:#9CDCFE;-webkit-text-stroke-color:#9CDCFE">templateColumns</span><span style="color:#CCCCCC;-webkit-text-stroke-color:#CCCCCC">:</span> <span style="color:#4EC9B0;-webkit-text-stroke-color:#4EC9B0">any</span><span style="color:#2D9CF8;-webkit-text-stroke-color:#2D9CF8">[</span><span style="color:#2D9CF8;-webkit-text-stroke-color:#2D9CF8">]</span> <span style="color:#CCCCCC;-webkit-text-stroke-color:#CCCCCC">=</span> <span style="color:#2D9CF8;-webkit-text-stroke-color:#2D9CF8">[</span><span style="color:#2D9CF8;-webkit-text-stroke-color:#2D9CF8">]</span><span style="color:#CCCCCC;-webkit-text-stroke-color:#CCCCCC">;</span></div><div style="position:absolute;left:66.6px;top:217.2px;font:400 34.0px/34.0px 'Liberation Mono', monospace;letter-spacing:-0.70px;color:#6e7681;white-space:pre">11</div><div style="position:absolute;left:169.0px;top:215.7px;font:400 34.0px/34.0px 'Liberation Mono', monospace;letter-spacing:-0.70px;white-space:pre;-webkit-text-stroke:0.7px currentColor">    <span style="color:#9CDCFE;-webkit-text-stroke-color:#9CDCFE">gridState</span><span style="color:#CCCCCC;-webkit-text-stroke-color:#CCCCCC">.</span><span style="color:#9CDCFE;-webkit-text-stroke-color:#9CDCFE">columns</span><span style="color:#CCCCCC;-webkit-text-stroke-color:#CCCCCC">.</span><span style="color:#DCDCAA;-webkit-text-stroke-color:#DCDCAA">forEach</span><span style="color:#2D9CF8;-webkit-text-stroke-color:#2D9CF8">(</span><span style="color:#F5D33A;-webkit-text-stroke-color:#F5D33A">(</span><span style="color:#9CDCFE;-webkit-text-stroke-color:#9CDCFE">column</span><span style="color:#F5D33A;-webkit-text-stroke-color:#F5D33A">)</span> <span style="color:#569CD6;-webkit-text-stroke-color:#569CD6">=&gt;</span> <span style="color:#F5D33A;-webkit-text-stroke-color:#F5D33A">{</span></div><div style="position:absolute;left:66.6px;top:266.4px;font:400 34.0px/34.0px 'Liberation Mono', monospace;letter-spacing:-0.70px;color:#6e7681;white-space:pre">12</div><div style="position:absolute;left:169.0px;top:264.9px;font:400 34.0px/34.0px 'Liberation Mono', monospace;letter-spacing:-0.70px;white-space:pre;-webkit-text-stroke:0.7px currentColor">      <span style="color:#C586C0;-webkit-text-stroke-color:#C586C0">if</span> <span style="color:#D470D4;-webkit-text-stroke-color:#D470D4">(</span><span style="color:#9CDCFE;-webkit-text-stroke-color:#9CDCFE">column</span><span style="color:#CCCCCC;-webkit-text-stroke-color:#CCCCCC">.</span><span style="color:#9CDCFE;-webkit-text-stroke-color:#9CDCFE">widthMode</span> <span style="color:#CCCCCC;-webkit-text-stroke-color:#CCCCCC">===</span> <span style="color:#4EC9B0;-webkit-text-stroke-color:#4EC9B0">TrackMode</span><span style="color:#CCCCCC;-webkit-text-stroke-color:#CCCCCC">.</span><span style="color:#4FC1FF;-webkit-text-stroke-color:#4FC1FF">minmax</span><span style="color:#D470D4;-webkit-text-stroke-color:#D470D4">)</span> <span style="color:#D470D4;-webkit-text-stroke-color:#D470D4">{</span></div><div style="position:absolute;left:66.6px;top:315.6px;font:400 34.0px/34.0px 'Liberation Mono', monospace;letter-spacing:-0.70px;color:#6e7681;white-space:pre">13</div><div style="position:absolute;left:169.0px;top:314.1px;font:400 34.0px/34.0px 'Liberation Mono', monospace;letter-spacing:-0.70px;white-space:pre;-webkit-text-stroke:0.7px currentColor">        <span style="color:#9CDCFE;-webkit-text-stroke-color:#9CDCFE">templateColumns</span><span style="color:#CCCCCC;-webkit-text-stroke-color:#CCCCCC">.</span><span style="color:#DCDCAA;-webkit-text-stroke-color:#DCDCAA">push</span><span style="color:#2D9CF8;-webkit-text-stroke-color:#2D9CF8">(</span><span style="color:#CE9178;-webkit-text-stroke-color:#CE9178">`</span><span style="color:#569CD6;-webkit-text-stroke-color:#569CD6">${</span><span style="color:#9CDCFE;-webkit-text-stroke-color:#9CDCFE">column</span><span style="color:#CCCCCC;-webkit-text-stroke-color:#CCCCCC">.</span><span style="color:#9CDCFE;-webkit-text-stroke-color:#9CDCFE">widthMode</span><span style="color:#569CD6;-webkit-text-stroke-color:#569CD6">}</span><span style="color:#CE9178;-webkit-text-stroke-color:#CE9178">(</span><span style="color:#569CD6;-webkit-text-stroke-color:#569CD6">${</span><span style="color:#9CDCFE;-webkit-text-stroke-color:#9CDCFE">column</span><span style="color:#CCCCCC;-webkit-text-stroke-color:#CCCCCC">.</span><span style="color:#9CDCFE;-webkit-text-stroke-color:#9CDCFE">widthValue</span><span style="color:#569CD6;-webkit-text-stroke-color:#569CD6">}</span><span style="color:#CE9178;-webkit-text-stroke-color:#CE9178">)</span><span style="color:#CE9178;-webkit-text-stroke-color:#CE9178">`</span><span style="color:#2D9CF8;-webkit-text-stroke-color:#2D9CF8">)</span><span style="color:#CCCCCC;-webkit-text-stroke-color:#CCCCCC">;</span></div><div style="position:absolute;left:66.6px;top:364.8px;font:400 34.0px/34.0px 'Liberation Mono', monospace;letter-spacing:-0.70px;color:#6e7681;white-space:pre">14</div><div style="position:absolute;left:169.0px;top:363.3px;font:400 34.0px/34.0px 'Liberation Mono', monospace;letter-spacing:-0.70px;white-space:pre;-webkit-text-stroke:0.7px currentColor">      <span style="color:#D470D4;-webkit-text-stroke-color:#D470D4">}</span></div><div style="position:absolute;left:66.6px;top:414.0px;font:400 34.0px/34.0px 'Liberation Mono', monospace;letter-spacing:-0.70px;color:#6e7681;white-space:pre">15</div><div style="position:absolute;left:169.0px;top:412.5px;font:400 34.0px/34.0px 'Liberation Mono', monospace;letter-spacing:-0.70px;white-space:pre;-webkit-text-stroke:0.7px currentColor">      <span style="color:#C586C0;-webkit-text-stroke-color:#C586C0">if</span> <span style="color:#D470D4;-webkit-text-stroke-color:#D470D4">(</span></div><div style="position:absolute;left:66.6px;top:463.2px;font:400 34.0px/34.0px 'Liberation Mono', monospace;letter-spacing:-0.70px;color:#6e7681;white-space:pre">16</div><div style="position:absolute;left:169.0px;top:461.7px;font:400 34.0px/34.0px 'Liberation Mono', monospace;letter-spacing:-0.70px;white-space:pre;-webkit-text-stroke:0.7px currentColor">        <span style="color:#9CDCFE;-webkit-text-stroke-color:#9CDCFE">column</span><span style="color:#CCCCCC;-webkit-text-stroke-color:#CCCCCC">.</span><span style="color:#9CDCFE;-webkit-text-stroke-color:#9CDCFE">widthMode</span> <span style="color:#CCCCCC;-webkit-text-stroke-color:#CCCCCC">===</span> <span style="color:#4EC9B0;-webkit-text-stroke-color:#4EC9B0">TrackMode</span><span style="color:#CCCCCC;-webkit-text-stroke-color:#CCCCCC">.</span><span style="color:#4FC1FF;-webkit-text-stroke-color:#4FC1FF">em</span> <span style="color:#CCCCCC;-webkit-text-stroke-color:#CCCCCC">||</span></div><div style="position:absolute;left:66.6px;top:512.4px;font:400 34.0px/34.0px 'Liberation Mono', monospace;letter-spacing:-0.70px;color:#6e7681;white-space:pre">17</div><div style="position:absolute;left:169.0px;top:510.9px;font:400 34.0px/34.0px 'Liberation Mono', monospace;letter-spacing:-0.70px;white-space:pre;-webkit-text-stroke:0.7px currentColor">        <span style="color:#9CDCFE;-webkit-text-stroke-color:#9CDCFE">column</span><span style="color:#CCCCCC;-webkit-text-stroke-color:#CCCCCC">.</span><span style="color:#9CDCFE;-webkit-text-stroke-color:#9CDCFE">widthMode</span> <span style="color:#CCCCCC;-webkit-text-stroke-color:#CCCCCC">===</span> <span style="color:#4EC9B0;-webkit-text-stroke-color:#4EC9B0">TrackMode</span><span style="color:#CCCCCC;-webkit-text-stroke-color:#CCCCCC">.</span><span style="color:#4FC1FF;-webkit-text-stroke-color:#4FC1FF">fr</span> <span style="color:#CCCCCC;-webkit-text-stroke-color:#CCCCCC">||</span></div><div style="position:absolute;left:66.6px;top:561.6px;font:400 34.0px/34.0px 'Liberation Mono', monospace;letter-spacing:-0.70px;color:#6e7681;white-space:pre">18</div><div style="position:absolute;left:169.0px;top:560.1px;font:400 34.0px/34.0px 'Liberation Mono', monospace;letter-spacing:-0.70px;white-space:pre;-webkit-text-stroke:0.7px currentColor">        <span style="color:#9CDCFE;-webkit-text-stroke-color:#9CDCFE">column</span><span style="color:#CCCCCC;-webkit-text-stroke-color:#CCCCCC">.</span><span style="color:#9CDCFE;-webkit-text-stroke-color:#9CDCFE">widthMode</span> <span style="color:#CCCCCC;-webkit-text-stroke-color:#CCCCCC">===</span> <span style="color:#4EC9B0;-webkit-text-stroke-color:#4EC9B0">TrackMode</span><span style="color:#CCCCCC;-webkit-text-stroke-color:#CCCCCC">.</span><span style="color:#4FC1FF;-webkit-text-stroke-color:#4FC1FF">percent</span> <span style="color:#CCCCCC;-webkit-text-stroke-color:#CCCCCC">||</span></div><div style="position:absolute;left:66.6px;top:610.8px;font:400 34.0px/34.0px 'Liberation Mono', monospace;letter-spacing:-0.70px;color:#6e7681;white-space:pre">19</div><div style="position:absolute;left:169.0px;top:609.3px;font:400 34.0px/34.0px 'Liberation Mono', monospace;letter-spacing:-0.70px;white-space:pre;-webkit-text-stroke:0.7px currentColor">        <span style="color:#9CDCFE;-webkit-text-stroke-color:#9CDCFE">column</span><span style="color:#CCCCCC;-webkit-text-stroke-color:#CCCCCC">.</span><span style="color:#9CDCFE;-webkit-text-stroke-color:#9CDCFE">widthMode</span> <span style="color:#CCCCCC;-webkit-text-stroke-color:#CCCCCC">===</span> <span style="color:#4EC9B0;-webkit-text-stroke-color:#4EC9B0">TrackMode</span><span style="color:#CCCCCC;-webkit-text-stroke-color:#CCCCCC">.</span><span style="color:#4FC1FF;-webkit-text-stroke-color:#4FC1FF">px</span></div><div style="position:absolute;left:66.6px;top:660.0px;font:400 34.0px/34.0px 'Liberation Mono', monospace;letter-spacing:-0.70px;color:#6e7681;white-space:pre">20</div><div style="position:absolute;left:169.0px;top:658.5px;font:400 34.0px/34.0px 'Liberation Mono', monospace;letter-spacing:-0.70px;white-space:pre;-webkit-text-stroke:0.7px currentColor">      <span style="color:#D470D4;-webkit-text-stroke-color:#D470D4">)</span> <span style="color:#D470D4;-webkit-text-stroke-color:#D470D4">{</span></div><div style="position:absolute;left:66.6px;top:709.2px;font:400 34.0px/34.0px 'Liberation Mono', monospace;letter-spacing:-0.70px;color:#6e7681;white-space:pre">21</div><div style="position:absolute;left:169.0px;top:707.7px;font:400 34.0px/34.0px 'Liberation Mono', monospace;letter-spacing:-0.70px;white-space:pre;-webkit-text-stroke:0.7px currentColor">        <span style="color:#9CDCFE;-webkit-text-stroke-color:#9CDCFE">templateColumns</span><span style="color:#CCCCCC;-webkit-text-stroke-color:#CCCCCC">.</span><span style="color:#DCDCAA;-webkit-text-stroke-color:#DCDCAA">push</span><span style="color:#2D9CF8;-webkit-text-stroke-color:#2D9CF8">(</span><span style="color:#CE9178;-webkit-text-stroke-color:#CE9178">`</span><span style="color:#569CD6;-webkit-text-stroke-color:#569CD6">${</span><span style="color:#9CDCFE;-webkit-text-stroke-color:#9CDCFE">column</span><span style="color:#CCCCCC;-webkit-text-stroke-color:#CCCCCC">.</span><span style="color:#9CDCFE;-webkit-text-stroke-color:#9CDCFE">widthValue</span><span style="color:#569CD6;-webkit-text-stroke-color:#569CD6">}</span><span style="color:#569CD6;-webkit-text-stroke-color:#569CD6">${</span><span style="color:#9CDCFE;-webkit-text-stroke-color:#9CDCFE">column</span><span style="color:#CCCCCC;-webkit-text-stroke-color:#CCCCCC">.</span><span style="color:#9CDCFE;-webkit-text-stroke-color:#9CDCFE">widthMode</span><span style="color:#569CD6;-webkit-text-stroke-color:#569CD6">}</span><span style="color:#CE9178;-webkit-text-stroke-color:#CE9178">`</span><span style="color:#2D9CF8;-webkit-text-stroke-color:#2D9CF8">)</span><span style="color:#CCCCCC;-webkit-text-stroke-color:#CCCCCC">;</span></div><div style="position:absolute;left:66.6px;top:758.4px;font:400 34.0px/34.0px 'Liberation Mono', monospace;letter-spacing:-0.70px;color:#6e7681;white-space:pre">22</div><div style="position:absolute;left:169.0px;top:756.9px;font:400 34.0px/34.0px 'Liberation Mono', monospace;letter-spacing:-0.70px;white-space:pre;-webkit-text-stroke:0.7px currentColor">      <span style="color:#D470D4;-webkit-text-stroke-color:#D470D4">}</span></div><div style="position:absolute;left:66.6px;top:807.6px;font:400 34.0px/34.0px 'Liberation Mono', monospace;letter-spacing:-0.70px;color:#6e7681;white-space:pre">23</div><div style="position:absolute;left:169.0px;top:806.1px;font:400 34.0px/34.0px 'Liberation Mono', monospace;letter-spacing:-0.70px;white-space:pre;-webkit-text-stroke:0.7px currentColor">    <span style="color:#F5D33A;-webkit-text-stroke-color:#F5D33A">}</span><span style="color:#2D9CF8;-webkit-text-stroke-color:#2D9CF8">)</span><span style="color:#CCCCCC;-webkit-text-stroke-color:#CCCCCC">;</span></div><div style="position:absolute;left:66.6px;top:856.8px;font:400 34.0px/34.0px 'Liberation Mono', monospace;letter-spacing:-0.70px;color:#6e7681;white-space:pre">24</div><div style="position:absolute;left:169.0px;top:855.3px;font:400 34.0px/34.0px 'Liberation Mono', monospace;letter-spacing:-0.70px;white-space:pre;-webkit-text-stroke:0.7px currentColor">    <span style="color:#569CD6;-webkit-text-stroke-color:#569CD6">let</span> <span style="color:#9CDCFE;-webkit-text-stroke-color:#9CDCFE">formattedColumns</span> <span style="color:#CCCCCC;-webkit-text-stroke-color:#CCCCCC">=</span> <span style="color:#9CDCFE;-webkit-text-stroke-color:#9CDCFE">templateColumns</span><span style="color:#CCCCCC;-webkit-text-stroke-color:#CCCCCC">.</span><span style="color:#DCDCAA;-webkit-text-stroke-color:#DCDCAA">join</span><span style="color:#2D9CF8;-webkit-text-stroke-color:#2D9CF8">(</span><span style="color:#CE9178;-webkit-text-stroke-color:#CE9178">' '</span><span style="color:#2D9CF8;-webkit-text-stroke-color:#2D9CF8">)</span><span style="color:#CCCCCC;-webkit-text-stroke-color:#CCCCCC">;</span></div><div style="position:absolute;left:66.6px;top:906.0px;font:400 34.0px/34.0px 'Liberation Mono', monospace;letter-spacing:-0.70px;color:#6e7681;white-space:pre">25</div><div style="position:absolute;left:169.0px;top:904.5px;font:400 34.0px/34.0px 'Liberation Mono', monospace;letter-spacing:-0.70px;white-space:pre;-webkit-text-stroke:0.7px currentColor">    <span style="color:#C586C0;-webkit-text-stroke-color:#C586C0">return</span> <span style="color:#9CDCFE;-webkit-text-stroke-color:#9CDCFE">formattedColumns</span><span style="color:#CCCCCC;-webkit-text-stroke-color:#CCCCCC">;</span></div><div style="position:absolute;left:66.6px;top:955.2px;font:400 34.0px/34.0px 'Liberation Mono', monospace;letter-spacing:-0.70px;color:#6e7681;white-space:pre">26</div><div style="position:absolute;left:169.0px;top:953.7px;font:400 34.0px/34.0px 'Liberation Mono', monospace;letter-spacing:-0.70px;white-space:pre;-webkit-text-stroke:0.7px currentColor">  <span style="color:#D470D4;-webkit-text-stroke-color:#D470D4">}</span><span style="color:#CCCCCC;-webkit-text-stroke-color:#CCCCCC">;</span></div><div style="position:absolute;left:66.6px;top:1004.4px;font:400 34.0px/34.0px 'Liberation Mono', monospace;letter-spacing:-0.70px;color:#6e7681;white-space:pre">27</div><div style="position:absolute;left:169.0px;top:1002.9px;font:400 34.0px/34.0px 'Liberation Mono', monospace;letter-spacing:-0.70px;white-space:pre;-webkit-text-stroke:0.7px currentColor"></div><div style="position:absolute;left:66.6px;top:1053.6px;font:400 34.0px/34.0px 'Liberation Mono', monospace;letter-spacing:-0.70px;color:#cccccc;white-space:pre">28</div><div style="position:absolute;left:169.0px;top:1052.1px;font:400 34.0px/34.0px 'Liberation Mono', monospace;letter-spacing:-0.70px;white-space:pre;-webkit-text-stroke:0.7px currentColor">  <span style="color:#569CD6;-webkit-text-stroke-color:#569CD6">const</span> <span style="color:#DCDCAA;-webkit-text-stroke-color:#DCDCAA">getTemplateRows</span> <span style="color:#CCCCCC;-webkit-text-stroke-color:#CCCCCC">=</span> <span style="color:#D470D4;-webkit-text-stroke-color:#D470D4">(</span><span style="color:#D470D4;-webkit-text-stroke-color:#D470D4">)</span> <span style="color:#569CD6;-webkit-text-stroke-color:#569CD6">=&gt;</span> <span style="color:#D470D4;-webkit-text-stroke-color:#D470D4">{</span></div><div style="position:absolute;left:66.6px;top:1102.8px;font:400 34.0px/34.0px 'Liberation Mono', monospace;letter-spacing:-0.70px;color:#6e7681;white-space:pre">29</div><div style="position:absolute;left:169.0px;top:1101.3px;font:400 34.0px/34.0px 'Liberation Mono', monospace;letter-spacing:-0.70px;white-space:pre;-webkit-text-stroke:0.7px currentColor">    <span style="color:#569CD6;-webkit-text-stroke-color:#569CD6">let</span> <span style="color:#9CDCFE;-webkit-text-stroke-color:#9CDCFE">templateRows</span><span style="color:#CCCCCC;-webkit-text-stroke-color:#CCCCCC">:</span> <span style="color:#4EC9B0;-webkit-text-stroke-color:#4EC9B0">any</span><span style="color:#2D9CF8;-webkit-text-stroke-color:#2D9CF8">[</span><span style="color:#2D9CF8;-webkit-text-stroke-color:#2D9CF8">]</span> <span style="color:#CCCCCC;-webkit-text-stroke-color:#CCCCCC">=</span> <span style="color:#2D9CF8;-webkit-text-stroke-color:#2D9CF8">[</span><span style="color:#2D9CF8;-webkit-text-stroke-color:#2D9CF8">]</span><span style="color:#CCCCCC;-webkit-text-stroke-color:#CCCCCC">;</span></div><div style="position:absolute;left:66.6px;top:1152.0px;font:400 34.0px/34.0px 'Liberation Mono', monospace;letter-spacing:-0.70px;color:#6e7681;white-space:pre">30</div><div style="position:absolute;left:169.0px;top:1150.5px;font:400 34.0px/34.0px 'Liberation Mono', monospace;letter-spacing:-0.70px;white-space:pre;-webkit-text-stroke:0.7px currentColor">    <span style="color:#9CDCFE;-webkit-text-stroke-color:#9CDCFE">gridState</span><span style="color:#CCCCCC;-webkit-text-stroke-color:#CCCCCC">.</span><span style="color:#9CDCFE;-webkit-text-stroke-color:#9CDCFE">rows</span><span style="color:#CCCCCC;-webkit-text-stroke-color:#CCCCCC">.</span><span style="color:#DCDCAA;-webkit-text-stroke-color:#DCDCAA">forEach</span><span style="color:#2D9CF8;-webkit-text-stroke-color:#2D9CF8">(</span><span style="color:#F5D33A;-webkit-text-stroke-color:#F5D33A">(</span><span style="color:#9CDCFE;-webkit-text-stroke-color:#9CDCFE">row</span><span style="color:#F5D33A;-webkit-text-stroke-color:#F5D33A">)</span> <span style="color:#569CD6;-webkit-text-stroke-color:#569CD6">=&gt;</span> <span style="color:#F5D33A;-webkit-text-stroke-color:#F5D33A">{</span></div><div style="position:absolute;left:66.6px;top:1201.2px;font:400 34.0px/34.0px 'Liberation Mono', monospace;letter-spacing:-0.70px;color:#6e7681;white-space:pre">31</div><div style="position:absolute;left:169.0px;top:1199.7px;font:400 34.0px/34.0px 'Liberation Mono', monospace;letter-spacing:-0.70px;white-space:pre;-webkit-text-stroke:0.7px currentColor">      <span style="color:#C586C0;-webkit-text-stroke-color:#C586C0">if</span> <span style="color:#D470D4;-webkit-text-stroke-color:#D470D4">(</span><span style="color:#9CDCFE;-webkit-text-stroke-color:#9CDCFE">row</span><span style="color:#CCCCCC;-webkit-text-stroke-color:#CCCCCC">.</span><span style="color:#9CDCFE;-webkit-text-stroke-color:#9CDCFE">heightMode</span> <span style="color:#CCCCCC;-webkit-text-stroke-color:#CCCCCC">===</span> <span style="color:#4EC9B0;-webkit-text-stroke-color:#4EC9B0">TrackMode</span><span style="color:#CCCCCC;-webkit-text-stroke-color:#CCCCCC">.</span><span style="color:#4FC1FF;-webkit-text-stroke-color:#4FC1FF">minmax</span><span style="color:#D470D4;-webkit-text-stroke-color:#D470D4">)</span> <span style="color:#D470D4;-webkit-text-stroke-color:#D470D4">{</span></div><div style="position:absolute;left:66.6px;top:1250.4px;font:400 34.0px/34.0px 'Liberation Mono', monospace;letter-spacing:-0.70px;color:#6e7681;white-space:pre">32</div><div style="position:absolute;left:169.0px;top:1248.9px;font:400 34.0px/34.0px 'Liberation Mono', monospace;letter-spacing:-0.70px;white-space:pre;-webkit-text-stroke:0.7px currentColor">        <span style="color:#9CDCFE;-webkit-text-stroke-color:#9CDCFE">templateRows</span><span style="color:#CCCCCC;-webkit-text-stroke-color:#CCCCCC">.</span><span style="color:#DCDCAA;-webkit-text-stroke-color:#DCDCAA">push</span><span style="color:#2D9CF8;-webkit-text-stroke-color:#2D9CF8">(</span><span style="color:#CE9178;-webkit-text-stroke-color:#CE9178">`</span><span style="color:#569CD6;-webkit-text-stroke-color:#569CD6">${</span><span style="color:#9CDCFE;-webkit-text-stroke-color:#9CDCFE">row</span><span style="color:#CCCCCC;-webkit-text-stroke-color:#CCCCCC">.</span><span style="color:#9CDCFE;-webkit-text-stroke-color:#9CDCFE">heightMode</span><span style="color:#569CD6;-webkit-text-stroke-color:#569CD6">}</span><span style="color:#CE9178;-webkit-text-stroke-color:#CE9178">(</span><span style="color:#569CD6;-webkit-text-stroke-color:#569CD6">${</span><span style="color:#9CDCFE;-webkit-text-stroke-color:#9CDCFE">row</span><span style="color:#CCCCCC;-webkit-text-stroke-color:#CCCCCC">.</span><span style="color:#9CDCFE;-webkit-text-stroke-color:#9CDCFE">heightValue</span><span style="color:#569CD6;-webkit-text-stroke-color:#569CD6">}</span><span style="color:#CE9178;-webkit-text-stroke-color:#CE9178">)</span><span style="color:#CE9178;-webkit-text-stroke-color:#CE9178">`</span><span style="color:#2D9CF8;-webkit-text-stroke-color:#2D9CF8">)</span><span style="color:#CCCCCC;-webkit-text-stroke-color:#CCCCCC">;</span></div><div style="position:absolute;left:66.6px;top:1299.6px;font:400 34.0px/34.0px 'Liberation Mono', monospace;letter-spacing:-0.70px;color:#6e7681;white-space:pre">33</div><div style="position:absolute;left:169.0px;top:1298.1px;font:400 34.0px/34.0px 'Liberation Mono', monospace;letter-spacing:-0.70px;white-space:pre;-webkit-text-stroke:0.7px currentColor">      <span style="color:#D470D4;-webkit-text-stroke-color:#D470D4">}</span></div><div style="position:absolute;left:66.6px;top:1348.8px;font:400 34.0px/34.0px 'Liberation Mono', monospace;letter-spacing:-0.70px;color:#6e7681;white-space:pre">34</div><div style="position:absolute;left:169.0px;top:1347.3px;font:400 34.0px/34.0px 'Liberation Mono', monospace;letter-spacing:-0.70px;white-space:pre;-webkit-text-stroke:0.7px currentColor">      <span style="color:#C586C0;-webkit-text-stroke-color:#C586C0">if</span> <span style="color:#D470D4;-webkit-text-stroke-color:#D470D4">(</span></div><div style="position:absolute;left:66.6px;top:1398.0px;font:400 34.0px/34.0px 'Liberation Mono', monospace;letter-spacing:-0.70px;color:#6e7681;white-space:pre">35</div><div style="position:absolute;left:169.0px;top:1396.5px;font:400 34.0px/34.0px 'Liberation Mono', monospace;letter-spacing:-0.70px;white-space:pre;-webkit-text-stroke:0.7px currentColor">        <span style="color:#9CDCFE;-webkit-text-stroke-color:#9CDCFE">row</span><span style="color:#CCCCCC;-webkit-text-stroke-color:#CCCCCC">.</span><span style="color:#9CDCFE;-webkit-text-stroke-color:#9CDCFE">heightMode</span> <span style="color:#CCCCCC;-webkit-text-stroke-color:#CCCCCC">===</span> <span style="color:#4EC9B0;-webkit-text-stroke-color:#4EC9B0">TrackMode</span><span style="color:#CCCCCC;-webkit-text-stroke-color:#CCCCCC">.</span><span style="color:#4FC1FF;-webkit-text-stroke-color:#4FC1FF">em</span> <span style="color:#CCCCCC;-webkit-text-stroke-color:#CCCCCC">||</span></div><div style="position:absolute;left:799.4px;top:1045.2px;width:20.7px;height:48.8px;background:rgba(0,100,0,0.1);border:2px solid #8a8a8a;box-sizing:border-box"></div><div style="position:absolute;left:0.0px;top:0.0px;width:1658.0px;height:6.0px;background:linear-gradient(rgba(0,0,0,0.35),rgba(0,0,0,0));"></div><div style="position:absolute;left:1626.0px;top:0.0px;width:32.0px;height:1426.0px;background:#1f1f1f;border-left:1px solid #111;box-sizing:border-box"></div><div style="position:absolute;left:1626.0px;top:70.0px;width:32.0px;height:349.0px;background:#333437;"></div><div style="position:absolute;left:1626.0px;top:324.0px;width:32.0px;height:3.0px;background:#5a5a5a;"></div><div style="position:absolute;left:1637.0px;top:325.0px;width:11.0px;height:13.0px;background:#9a9a9a;"></div><div style="position:absolute;left:169.0px;top:1398.0px;width:1380.0px;height:28.0px;background:rgba(121,121,121,0.25);"></div></div><div style="position:absolute;left:0.0px;top:1590.0px;width:2412.0px;height:51.0px;background:#181818;"></div><div style="position:absolute;left:0.0px;top:1590.0px;width:2412.0px;height:2.0px;background:#2b2b2b;"></div><div style="position:absolute;left:0.0px;top:1590.0px;width:79.5px;height:51.0px;background:#3478d0;"></div><svg style="position:absolute;left:29px;top:1601.5px;width:22px;height:29px;overflow:visible" viewBox="0 0 22 29" ><path d="M1.7 9 L10.2 17.7 L1.5 26.5 M19.8 0.8 L11.5 9.5 L19.8 17.7" fill="none" stroke="#fff" stroke-width="2.4" stroke-linecap="round"/></svg><svg style="position:absolute;left:101px;top:1600px;width:27px;height:32px;overflow:visible" viewBox="0 0 27 32" ><g fill="none" stroke="#cccccc" stroke-width="2.3"><circle cx="6" cy="5.5" r="4.2"/><circle cx="6" cy="26.5" r="4.2"/><circle cx="21" cy="10.5" r="4.2"/><path d="M6 9.7 V22.3 M21 14.7 C21 19 14 18.5 8 22"/></g></svg><div style="position:absolute;left:140.0px;top:1601.5px;font:400 29px/29px 'Liberation Sans', sans-serif;color:#cccccc;white-space:pre;">main*</div><svg style="position:absolute;left:253.5px;top:1603px;width:32px;height:28px;overflow:visible" viewBox="0 0 32 28" ><g fill="none" stroke="#cccccc" stroke-width="2.3" stroke-linejoin="round"><path d="M4.2 14.5 A11.5 11.5 0 1 1 26.8 14.5 M26.8 10.5 A11.5 11.5 0 1 1 4.2 10.5"/><path d="M22.5 11 L26.8 14.8 L30.5 10.5 M0.5 14.5 L4.2 10.2 L8.5 14"/></g></svg><svg style="position:absolute;left:325px;top:1601px;width:30px;height:30px;overflow:visible" viewBox="0 0 30 30" ><g fill="none" stroke="#cccccc" stroke-width="2.3"><circle cx="15" cy="15" r="13.2"/><path d="M9.5 9.5 L20.5 20.5 M20.5 9.5 L9.5 20.5"/></g></svg><div style="position:absolute;left:364.5px;top:1601.5px;font:400 29px/29px 'Liberation Sans', sans-serif;color:#cccccc;white-space:pre;">0</div><svg style="position:absolute;left:391px;top:1601px;width:30px;height:29px;overflow:visible" viewBox="0 0 30 29" ><g fill="none" stroke="#cccccc" stroke-width="2.3" stroke-linejoin="round"><path d="M15 2 L28.5 27 H1.5 Z"/><path d="M15 10 V19 M15 21.5 V24"/></g></svg><div style="position:absolute;left:431.5px;top:1601.5px;font:400 29px/29px 'Liberation Sans', sans-serif;color:#cccccc;white-space:pre;">0</div><div style="position:absolute;left:1990.0px;top:1602.1px;font:400 27px/27px 'Liberation Sans', sans-serif;color:#cccccc;white-space:pre;letter-spacing:-2px">{ }</div><div style="position:absolute;left:2035.0px;top:1601.3px;font:400 29.2px/29.2px 'Liberation Sans', sans-serif;color:#cccccc;white-space:pre;">TypeScript JSX</div><svg style="position:absolute;left:2273px;top:1602px;width:35px;height:32px;overflow:visible" viewBox="0 0 35 32" ><ellipse cx="17.4" cy="22" rx="16.4" ry="8.2" fill="#cccccc"/><rect x="7.5" y="15" width="20.5" height="11" rx="2" fill="#181818"/><g fill="#181818" stroke="#cccccc" stroke-width="2.6"><rect x="4.5" y="2.5" width="12" height="12.5" rx="5"/><rect x="18.3" y="2.5" width="12" height="12.5" rx="5"/></g><rect x="12.3" y="19" width="2.4" height="6.5" rx="1.2" fill="#cccccc"/><rect x="20" y="19" width="2.4" height="6.5" rx="1.2" fill="#cccccc"/></svg><svg style="position:absolute;left:2348px;top:1602px;width:26px;height:30px;overflow:visible" viewBox="0 0 26 30" ><g fill="none" stroke="#cccccc" stroke-width="2.3" stroke-linejoin="round"><path d="M4.5 23 V12.5 A8.5 8.5 0 0 1 21.5 12.5 V23 L24.5 25 H1.5 Z"/><path d="M10 26 A3 3 0 0 0 16 26"/></g></svg></div><div style="position:absolute;inset:0;border-radius:26px;box-shadow:inset 0 1.5px 0 rgba(255,255,255,0.32), inset 1.5px 0 0 rgba(255,255,255,0.14);pointer-events:none"></div></div></body></html>
